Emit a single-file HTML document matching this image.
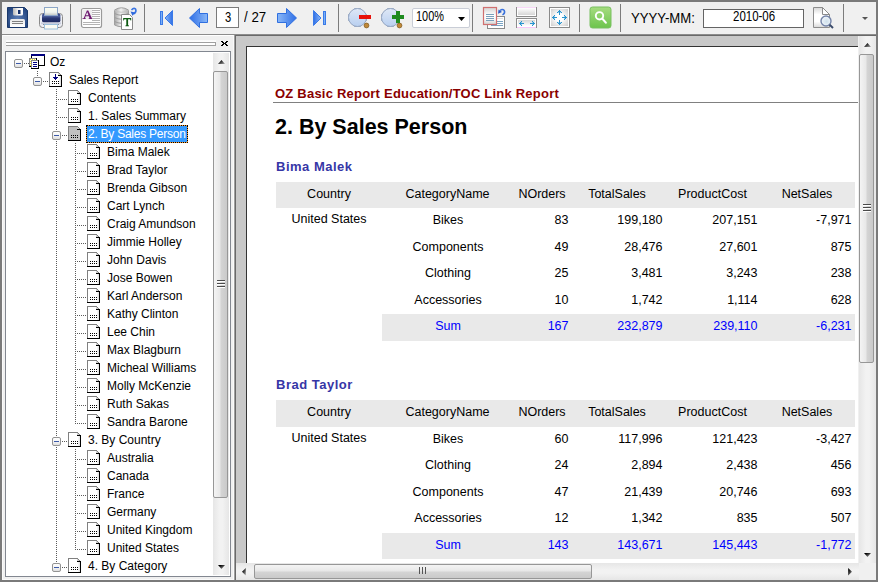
<!DOCTYPE html>
<html><head><meta charset="utf-8"><style>
html,body{margin:0;padding:0;}
body{width:878px;height:582px;overflow:hidden;position:relative;background:#f0f0f0;font-family:"Liberation Sans", sans-serif;}
svg{overflow:visible}
</style></head><body>
<div style="position:absolute;left:0px;top:0px;width:878px;height:2px;background:#7a7a7a"></div><div style="position:absolute;left:0px;top:580px;width:878px;height:2px;background:#7a7a7a"></div><div style="position:absolute;left:0px;top:0px;width:2px;height:582px;background:#7a7a7a"></div><div style="position:absolute;left:876px;top:0px;width:2px;height:582px;background:#7a7a7a"></div><div style="position:absolute;left:2px;top:34px;width:874px;height:1px;background:#8c8c8c"></div><div style="position:absolute;left:70px;top:4px;width:1px;height:28px;background:#7c7c7c"></div><div style="position:absolute;left:144px;top:4px;width:1px;height:28px;background:#7c7c7c"></div><div style="position:absolute;left:338px;top:4px;width:1px;height:28px;background:#7c7c7c"></div><div style="position:absolute;left:472px;top:4px;width:1px;height:28px;background:#7c7c7c"></div><div style="position:absolute;left:579px;top:4px;width:1px;height:28px;background:#7c7c7c"></div><div style="position:absolute;left:620px;top:4px;width:1px;height:28px;background:#7c7c7c"></div><div style="position:absolute;left:843px;top:4px;width:1px;height:28px;background:#7c7c7c"></div><svg style="position:absolute;left:7px;top:7px;" width="22" height="22" viewBox="0 0 22 22">
<defs><radialGradient id="fl" cx="0.5" cy="0.55" r="0.6"><stop offset="0" stop-color="#5a7cb4"/><stop offset="1" stop-color="#244680"/></radialGradient>
<linearGradient id="fsh2" x1="0" y1="0" x2="1" y2="0"><stop offset="0" stop-color="#b8b8b8"/><stop offset="0.5" stop-color="#f4f4f4"/><stop offset="1" stop-color="#ffffff"/></linearGradient>
<linearGradient id="fsh" x1="0" y1="0" x2="0" y2="1"><stop offset="0" stop-color="#e8e8e8"/><stop offset="1" stop-color="#ffffff"/></linearGradient></defs>
<path d="M0.5 0.5 H17.5 L20.5 3.5 V20.5 H0.5 Z" fill="url(#fl)" stroke="#1a386a"/>
<path d="M6 1 H16 V7 Q16 8.5 14.5 8.5 H7.5 Q6 8.5 6 7 Z" fill="url(#fsh2)"/>
<rect x="11" y="3" width="2.5" height="4" fill="#14306a"/>
<path d="M3 20 V13.5 Q3 12 4.5 12 H16.5 Q18 12 18 13.5 V20 Z" fill="url(#fsh)"/>
<rect x="5" y="14" width="11" height="1" fill="#808080"/>
<rect x="5" y="16" width="11" height="1" fill="#808080"/>
</svg><svg style="position:absolute;left:38px;top:6px;" width="27" height="25" viewBox="0 0 27 25">
<defs><linearGradient id="pb" x1="0" y1="0" x2="0" y2="1"><stop offset="0" stop-color="#34458a"/><stop offset="0.35" stop-color="#4a5c98"/><stop offset="0.5" stop-color="#2a3a76"/><stop offset="1" stop-color="#1c285e"/></linearGradient>
<linearGradient id="pp" x1="0" y1="0" x2="0" y2="1"><stop offset="0" stop-color="#fffff0"/><stop offset="0.6" stop-color="#eef4f0"/><stop offset="1" stop-color="#c0c4c0"/></linearGradient></defs>
<rect x="1.5" y="7.5" width="23" height="14" rx="3" fill="#eceef4" stroke="#8a8a8a"/>
<rect x="4" y="7.6" width="18.4" height="8.8" rx="2" fill="url(#pb)"/>
<rect x="3" y="16.4" width="20" height="1.8" fill="#c8cede"/>
<rect x="5" y="18.2" width="16" height="0.8" fill="#707888"/>
<rect x="6.5" y="1.5" width="13" height="8" fill="url(#pp)" stroke="#8ca6c8"/>
<rect x="6.5" y="18.5" width="13" height="4.5" fill="#fbfbf2" stroke="#9cc0dc"/>
</svg><svg style="position:absolute;left:80px;top:7px;" width="24" height="23" viewBox="0 0 24 23">
<rect x="1.5" y="1.5" width="20" height="19" rx="2" fill="#fff" stroke="#9a9a9a" stroke-width="1.2"/>
<rect x="2.5" y="2.5" width="10" height="10" fill="#eeeeee"/>
<path fill-rule="evenodd" fill="#6e1a72" d="M2.5 12 H5.8 V11.2 H5 L5.6 9.3 H8.9 L9.5 11.2 H8.7 V12 H12.6 V11.2 H11.9 L8.3 3.4 H6.9 L3.7 11.2 H2.5 Z M5.9 8.3 L7.2 4.9 L8.5 8.3 Z"/>
<g fill="#b4b4b4"><rect x="12" y="3" width="8" height="1"/><rect x="12" y="5" width="8" height="1"/><rect x="12" y="7" width="8" height="1"/><rect x="12" y="9" width="8" height="1"/><rect x="12" y="11" width="8" height="1"/><rect x="12" y="13" width="8" height="1"/><rect x="3" y="15" width="17" height="1"/><rect x="3" y="17" width="17" height="1"/></g>
</svg><svg style="position:absolute;left:113px;top:6px;" width="26" height="24" viewBox="0 0 26 24">
<defs><linearGradient id="db" x1="0" y1="0" x2="1" y2="0"><stop offset="0" stop-color="#a4a4a4"/><stop offset="0.45" stop-color="#f0f0f0"/><stop offset="1" stop-color="#b0b0b0"/></linearGradient></defs>
<path d="M1.5 4 Q8.5 -0.5 15.5 4 V19 Q8.5 22.5 1.5 19 Z" fill="url(#db)" stroke="#a0a0a0"/>
<path d="M1.5 4.5 Q8.5 8 15.5 4.5" fill="none" stroke="#c4c4c4"/><path d="M1.5 7.5 Q8.5 11 15.5 7.5 M1.5 11.5 Q8.5 15 15.5 11.5 M1.5 15.5 Q8.5 19 15.5 15.5" fill="none" stroke="#9c9c9c"/>
<path d="M8.5 8.5 H16.5 L19.5 11.5 V23.5 H8.5 Z" fill="#fff" stroke="#8a8a8a"/>
<path fill="#0d5a12" d="M10.2 12 H18.2 V14.6 H17.6 L17 13.2 H15.1 V19.3 L16 19.6 V20.2 H12.4 V19.6 L13.3 19.3 V13.2 H11.4 L10.8 14.6 H10.2 Z"/>
<path d="M18.5 4 Q20.5 1.5 22.5 2.8 Q24 5.5 21 8" fill="none" stroke="#3a74e0" stroke-width="1.5"/>
<path d="M17.5 5.5 L19.5 9.8 L22.5 6.5 Z" fill="#2e68dc"/>
</svg><svg style="position:absolute;left:159px;top:9px;" width="16" height="18" viewBox="0 0 16 18"><defs><linearGradient id="bg1" x1="1" y1="0" x2="0" y2="0"><stop offset="0" stop-color="#2f6fe6"/><stop offset="1" stop-color="#8ab8f8"/></linearGradient></defs>
<rect x="1.5" y="2.5" width="2" height="13" fill="#7ab0f6" stroke="#3a7ae8"/>
<path d="M6 9 L13.5 1.5 V16.5 Z" fill="url(#bg1)" stroke="#3a7ae8"/>
</svg><svg style="position:absolute;left:188px;top:7px;" width="22" height="22" viewBox="0 0 22 22"><defs><linearGradient id="bg2" x1="0" y1="0" x2="1" y2="0"><stop offset="0" stop-color="#2f6fe6"/><stop offset="1" stop-color="#8ab8f8"/></linearGradient></defs>
<path d="M1.5 11 L11.5 1.5 V6.5 H19.5 V15.5 H11.5 V20.5 Z" fill="url(#bg2)" stroke="#2f6fe0"/>
</svg><svg style="position:absolute;left:276px;top:7px;" width="22" height="22" viewBox="0 0 22 22"><defs><linearGradient id="bg3" x1="1" y1="0" x2="0" y2="0"><stop offset="0" stop-color="#2f6fe6"/><stop offset="1" stop-color="#8ab8f8"/></linearGradient></defs>
<path d="M20.5 11 L10.5 1.5 V6.5 H1.5 V15.5 H10.5 V20.5 Z" fill="url(#bg3)" stroke="#2f6fe0"/>
</svg><svg style="position:absolute;left:312px;top:9px;" width="16" height="18" viewBox="0 0 16 18"><defs><linearGradient id="bg4" x1="0" y1="0" x2="1" y2="0"><stop offset="0" stop-color="#2f6fe6"/><stop offset="1" stop-color="#8ab8f8"/></linearGradient></defs>
<path d="M1.5 1.5 L9 9 L1.5 16.5 Z" fill="url(#bg4)" stroke="#3a7ae8"/>
<rect x="11.5" y="2.5" width="2" height="13" fill="#7ab0f6" stroke="#3a7ae8"/>
</svg><div style="position:absolute;left:216px;top:7px;width:21px;height:19px;background:#fff;border:1px solid #7a7a7a"></div><div style="position:absolute;left:225px;top:7.15px;font-size:14px;line-height:20px;color:#000;font-weight:normal;white-space:nowrap;transform:scaleX(0.8);transform-origin:0 0">3</div><div style="position:absolute;left:244px;top:7.15px;font-size:14px;line-height:20px;color:#000;font-weight:normal;white-space:nowrap;transform:scaleX(0.95);transform-origin:0 0">/ 27</div><svg style="position:absolute;left:348px;top:8px;" width="24" height="22" viewBox="0 0 24 22"><defs><linearGradient id="zg1" x1="0" y1="0" x2="0" y2="1"><stop offset="0" stop-color="#dfe8f6"/><stop offset="1" stop-color="#b8cff0"/></linearGradient></defs>
<path d="M6.5 0.5 H12.5 L18.5 6.5 V12.5 L12.5 18.5 H6.5 L0.5 12.5 V6.5 Z" fill="url(#zg1)" stroke="#9aaac4" stroke-linejoin="round"/><circle cx="9.5" cy="9.5" r="9" fill="url(#zg1)" stroke="#9aaac4"/>
<circle cx="18.5" cy="17.5" r="2.4" fill="#c08838" stroke="#7a5418" stroke-width="0.7"/><rect x="11" y="7" width="12" height="4" fill="#e8120a"/></svg><svg style="position:absolute;left:381px;top:8px;" width="24" height="22" viewBox="0 0 24 22"><defs><linearGradient id="zg2" x1="0" y1="0" x2="0" y2="1"><stop offset="0" stop-color="#dfe8f6"/><stop offset="1" stop-color="#b8cff0"/></linearGradient></defs>
<path d="M6.5 0.5 H12.5 L18.5 6.5 V12.5 L12.5 18.5 H6.5 L0.5 12.5 V6.5 Z" fill="url(#zg2)" stroke="#9aaac4" stroke-linejoin="round"/><circle cx="9.5" cy="9.5" r="9" fill="url(#zg2)" stroke="#9aaac4"/>
<circle cx="18.5" cy="17.5" r="2.4" fill="#c08838" stroke="#7a5418" stroke-width="0.7"/><rect x="11" y="7" width="12" height="4" fill="#1e8a1e"/><rect x="15" y="3" width="4" height="12" fill="#1e8a1e"/></svg><div style="position:absolute;left:412px;top:8px;width:56px;height:18px;background:#fff;border:1px solid #c9cdd6;border-radius:2px"></div><div style="position:absolute;left:416px;top:6.15px;font-size:14px;line-height:20px;color:#000;font-weight:normal;white-space:nowrap;transform:scaleX(0.78);transform-origin:0 0">100%</div><svg style="position:absolute;left:458px;top:17px;" width="8" height="5" viewBox="0 0 8 5"><path d="M0 0 H7 L3.5 4 Z" fill="#000"/></svg><svg style="position:absolute;left:482px;top:6px;" width="24" height="24" viewBox="0 0 24 24">
<defs><linearGradient id="pg1" x1="0" y1="0" x2="0" y2="1"><stop offset="0" stop-color="#d4d4d4"/><stop offset="0.45" stop-color="#ffffff"/><stop offset="0.7" stop-color="#f8f8f8"/><stop offset="1" stop-color="#d0d0d0"/></linearGradient></defs>
<rect x="5.5" y="10.5" width="17" height="12" fill="#fff" stroke="#8a8a8a"/>
<rect x="15" y="12" width="6" height="1" fill="#e0e0e0"/>
<g fill="#7aa4c4"><rect x="15" y="15" width="6" height="1"/><rect x="15" y="17" width="6" height="1"/><rect x="9" y="19" width="12" height="1"/></g>
<rect x="1.5" y="1.5" width="13" height="17" fill="url(#pg1)" stroke="#d07070" stroke-width="1.2"/>
<g fill="#7aa0bc"><rect x="4" y="8" width="8" height="1"/><rect x="4" y="10" width="8" height="1"/><rect x="4" y="12" width="8" height="1"/><rect x="4" y="14" width="8" height="1"/></g>
<path d="M18 4.5 Q20.5 2.5 22.3 4.5 Q23.5 7 20.5 9" fill="none" stroke="#3a72dc" stroke-width="1.5"/>
<path d="M16 7.8 L16.6 3.4 L20 6 Z" fill="#2a5cc8"/>
</svg><svg style="position:absolute;left:515px;top:6px;" width="24" height="23" viewBox="0 0 24 23"><defs><linearGradient id="pg2" x1="0" y1="0" x2="0" y2="1"><stop offset="0" stop-color="#ffffff"/><stop offset="1" stop-color="#d6d6d6"/></linearGradient><linearGradient id="pg2b" x1="0" y1="0" x2="0" y2="1"><stop offset="0" stop-color="#d6d6d6"/><stop offset="1" stop-color="#ffffff"/></linearGradient></defs><g shape-rendering="crispEdges"><rect x="2" y="1" width="19" height="9" fill="#fff"/><rect x="3" y="2" width="17" height="7" fill="url(#pg2)"/><rect x="2" y="1" width="19" height="1" fill="#f8d8f8"/><rect x="1" y="1" width="1" height="10" fill="#8c8c8c"/><rect x="21" y="1" width="1" height="10" fill="#8c8c8c"/><rect x="1" y="10" width="21" height="1" fill="#8c8c8c"/><rect x="2" y="13" width="19" height="8" fill="#fff"/><rect x="3" y="14" width="17" height="6" fill="url(#pg2b)"/><rect x="2" y="21" width="19" height="1" fill="#f8c8f8"/><rect x="1" y="12" width="21" height="1" fill="#8c8c8c"/><rect x="1" y="12" width="1" height="10" fill="#8c8c8c"/><rect x="21" y="12" width="1" height="10" fill="#8c8c8c"/><rect x="4" y="17" width="5" height="1" fill="#2994cf"/><rect x="5" y="16" width="1" height="1" fill="#2994cf"/><rect x="5" y="18" width="1" height="1" fill="#2994cf"/><rect x="6" y="15" width="1" height="1" fill="#2994cf"/><rect x="6" y="19" width="1" height="1" fill="#2994cf"/><rect x="6" y="16" width="1" height="1" fill="#9fd0ec"/><rect x="6" y="18" width="1" height="1" fill="#9fd0ec"/><rect x="15" y="17" width="5" height="1" fill="#2994cf"/><rect x="18" y="16" width="1" height="1" fill="#2994cf"/><rect x="18" y="18" width="1" height="1" fill="#2994cf"/><rect x="17" y="15" width="1" height="1" fill="#2994cf"/><rect x="17" y="19" width="1" height="1" fill="#2994cf"/><rect x="17" y="16" width="1" height="1" fill="#9fd0ec"/><rect x="17" y="18" width="1" height="1" fill="#9fd0ec"/></g></svg><svg style="position:absolute;left:548px;top:6px;" width="23" height="23" viewBox="0 0 23 23"><defs><radialGradient id="pg3" cx="0.5" cy="0.5" r="0.7"><stop offset="0.3" stop-color="#ffffff"/><stop offset="1" stop-color="#cfcfcf"/></radialGradient></defs><g shape-rendering="crispEdges"><rect x="1" y="1" width="21" height="21" fill="#8a8a8a"/><rect x="2" y="2" width="19" height="19" fill="#fff"/><rect x="3" y="3" width="17" height="17" fill="url(#pg3)"/><rect x="11" y="4" width="1" height="5" fill="#2994cf"/><rect x="10" y="5" width="1" height="1" fill="#2994cf"/><rect x="12" y="5" width="1" height="1" fill="#2994cf"/><rect x="9" y="6" width="1" height="1" fill="#2994cf"/><rect x="13" y="6" width="1" height="1" fill="#2994cf"/><rect x="10" y="6" width="1" height="1" fill="#9fd0ec"/><rect x="12" y="6" width="1" height="1" fill="#9fd0ec"/><rect x="11" y="14" width="1" height="5" fill="#2994cf"/><rect x="10" y="17" width="1" height="1" fill="#2994cf"/><rect x="12" y="17" width="1" height="1" fill="#2994cf"/><rect x="9" y="16" width="1" height="1" fill="#2994cf"/><rect x="13" y="16" width="1" height="1" fill="#2994cf"/><rect x="10" y="16" width="1" height="1" fill="#9fd0ec"/><rect x="12" y="16" width="1" height="1" fill="#9fd0ec"/><rect x="4" y="11" width="5" height="1" fill="#2994cf"/><rect x="5" y="10" width="1" height="1" fill="#2994cf"/><rect x="5" y="12" width="1" height="1" fill="#2994cf"/><rect x="6" y="9" width="1" height="1" fill="#2994cf"/><rect x="6" y="13" width="1" height="1" fill="#2994cf"/><rect x="6" y="10" width="1" height="1" fill="#9fd0ec"/><rect x="6" y="12" width="1" height="1" fill="#9fd0ec"/><rect x="14" y="11" width="5" height="1" fill="#2994cf"/><rect x="17" y="10" width="1" height="1" fill="#2994cf"/><rect x="17" y="12" width="1" height="1" fill="#2994cf"/><rect x="16" y="9" width="1" height="1" fill="#2994cf"/><rect x="16" y="13" width="1" height="1" fill="#2994cf"/><rect x="16" y="10" width="1" height="1" fill="#9fd0ec"/><rect x="16" y="12" width="1" height="1" fill="#9fd0ec"/></g></svg><svg style="position:absolute;left:589px;top:6px;" width="23" height="23" viewBox="0 0 23 23">
<defs><linearGradient id="gs" x1="0" y1="0" x2="0" y2="1"><stop offset="0" stop-color="#a6dc80"/><stop offset="1" stop-color="#6cc44c"/></linearGradient></defs>
<rect x="1" y="1" width="21" height="21" rx="2.5" fill="url(#gs)" stroke="#78c060"/>
<circle cx="10.5" cy="9.8" r="3.7" fill="none" stroke="#fff" stroke-width="1.9"/>
<path d="M13.3 12.6 L16.8 16.6" stroke="#fff" stroke-width="2.2" stroke-linecap="round"/>
</svg><div style="position:absolute;left:631px;top:8.15px;font-size:14px;line-height:20px;color:#000;font-weight:normal;white-space:nowrap;transform:scaleX(0.94);transform-origin:0 0">YYYY-MM:</div><div style="position:absolute;left:703px;top:9px;width:99px;height:17px;background:#fff;border:1px solid #646464"></div><div style="position:absolute;left:733px;top:6.15px;font-size:14px;line-height:20px;color:#000;font-weight:normal;white-space:nowrap;transform:scaleX(0.82);transform-origin:0 0">2010-06</div><svg style="position:absolute;left:812px;top:6px;" width="24" height="24" viewBox="0 0 24 24">
<defs><linearGradient id="pv" x1="0" y1="0" x2="0" y2="1"><stop offset="0" stop-color="#d8d8d8"/><stop offset="0.35" stop-color="#ffffff"/><stop offset="0.7" stop-color="#ffffff"/><stop offset="1" stop-color="#d8d8d8"/></linearGradient>
<radialGradient id="mg" cx="0.55" cy="0.55" r="0.6"><stop offset="0" stop-color="#cfe0ec"/><stop offset="1" stop-color="#f4f8fc"/></radialGradient></defs>
<path d="M1.5 1.5 H10.5 L17.5 8.5 V21.5 H1.5 Z" fill="url(#pv)" stroke="#8c8c8c"/>
<path d="M10.5 1.5 V8.5 H17.5 Z" fill="#fff" stroke="#8c8c8c"/>
<circle cx="14" cy="15" r="5" fill="url(#mg)" stroke="#7484a8" stroke-width="1.4"/>
<path d="M17.6 18.6 L21 22" stroke="#3a4a6a" stroke-width="2"/>
</svg><svg style="position:absolute;left:862px;top:17px;" width="7" height="4" viewBox="0 0 7 4"><path d="M0 0 H6 L3 3 Z" fill="#555"/></svg><div style="position:absolute;left:2px;top:35px;width:232px;height:1px;background:#fff"></div><div style="position:absolute;left:2px;top:35px;width:1px;height:545px;background:#fafafa"></div><div style="position:absolute;left:2px;top:579px;width:232px;height:1px;background:#fafafa"></div><div style="position:absolute;left:6px;top:40px;width:210px;height:2px;background:linear-gradient(#f8f8f8,#fff)"></div><div style="position:absolute;left:6px;top:42px;width:210px;height:1px;background:#a0a0a0"></div><div style="position:absolute;left:6px;top:43px;width:210px;height:2px;background:#fff"></div><div style="position:absolute;left:6px;top:45px;width:210px;height:1px;background:#a0a0a0"></div><div style="position:absolute;left:215px;top:42px;width:1px;height:4px;background:#a0a0a0"></div><svg style="position:absolute;left:221px;top:41px;" width="7" height="5" viewBox="0 0 7 5"><g fill="#000" shape-rendering="crispEdges"><rect x="0" y="0" width="1" height="1"/><rect x="1" y="0" width="1" height="1"/><rect x="5" y="0" width="1" height="1"/><rect x="6" y="0" width="1" height="1"/><rect x="1" y="1" width="1" height="1"/><rect x="2" y="1" width="1" height="1"/><rect x="4" y="1" width="1" height="1"/><rect x="5" y="1" width="1" height="1"/><rect x="2" y="2" width="1" height="1"/><rect x="3" y="2" width="1" height="1"/><rect x="4" y="2" width="1" height="1"/><rect x="1" y="3" width="1" height="1"/><rect x="2" y="3" width="1" height="1"/><rect x="4" y="3" width="1" height="1"/><rect x="5" y="3" width="1" height="1"/><rect x="0" y="4" width="1" height="1"/><rect x="1" y="4" width="1" height="1"/><rect x="5" y="4" width="1" height="1"/><rect x="6" y="4" width="1" height="1"/></g></svg><div style="position:absolute;left:5px;top:51px;width:224px;height:524px;background:#fff;border:1px solid #828790"></div><div style="position:absolute;left:233px;top:35px;width:1px;height:545px;background:#fafafa"></div><div style="position:absolute;left:234px;top:35px;width:1px;height:545px;background:#a0a0a0"></div><div style="position:absolute;left:235px;top:35px;width:1px;height:545px;background:#696969"></div><div style="position:absolute;left:213px;top:53px;width:16px;height:522px;background:linear-gradient(to right,#e6e6e6,#f2f2f2 40%,#f2f2f2 60%,#e6e6e6)"></div><svg style="position:absolute;left:218px;top:60px;" width="8" height="5" viewBox="0 0 8 5"><defs><linearGradient id="uat" x1="0" y1="0" x2="1" y2="1"><stop offset="0.2" stop-color="#000"/><stop offset="1" stop-color="#b0b0b0"/></linearGradient></defs><path d="M0 4 L3.5 0 L7 4 Z" fill="url(#uat)"/></svg><svg style="position:absolute;left:218px;top:565px;" width="8" height="5" viewBox="0 0 8 5"><defs><linearGradient id="dat" x1="0" y1="0" x2="1" y2="1"><stop offset="0.2" stop-color="#000"/><stop offset="1" stop-color="#b0b0b0"/></linearGradient></defs><path d="M0 0 L3.5 4 L7 0 Z" fill="url(#dat)"/></svg><div style="position:absolute;left:213px;top:71px;width:13px;height:425px;border:1px solid #979797;border-radius:2px;background:linear-gradient(to right,#f4f4f4,#e8e8e8 45%,#d4d4d4 55%,#cacaca)"></div><div style="position:absolute;left:217px;top:280px;width:8px;height:1px;background:#4a4a4a;box-shadow:0 1px 0 #fff"></div><div style="position:absolute;left:217px;top:283px;width:8px;height:1px;background:#4a4a4a;box-shadow:0 1px 0 #fff"></div><div style="position:absolute;left:217px;top:286px;width:8px;height:1px;background:#4a4a4a;box-shadow:0 1px 0 #fff"></div><div style="position:absolute;left:236px;top:35px;width:640px;height:1px;background:#696969"></div><div style="position:absolute;left:236px;top:36px;width:622px;height:527px;background:#c8c8c8"></div><div style="position:absolute;left:246px;top:46px;width:612px;height:517px;background:#fff;border-left:1px solid #333;border-top:1px solid #333;box-sizing:border-box"></div><div style="position:absolute;left:859px;top:36px;width:17px;height:527px;background:linear-gradient(to right,#e6e6e6,#f2f2f2 40%,#f2f2f2 60%,#e6e6e6)"></div><svg style="position:absolute;left:864px;top:43px;" width="8" height="5" viewBox="0 0 8 5"><defs><linearGradient id="uar" x1="0" y1="0" x2="1" y2="1"><stop offset="0.2" stop-color="#000"/><stop offset="1" stop-color="#b0b0b0"/></linearGradient></defs><path d="M0 4 L3.5 0 L7 4 Z" fill="url(#uar)"/></svg><svg style="position:absolute;left:864px;top:553px;" width="8" height="5" viewBox="0 0 8 5"><defs><linearGradient id="dar" x1="0" y1="0" x2="1" y2="1"><stop offset="0.2" stop-color="#000"/><stop offset="1" stop-color="#b0b0b0"/></linearGradient></defs><path d="M0 0 L3.5 4 L7 0 Z" fill="url(#dar)"/></svg><div style="position:absolute;left:859px;top:54px;width:13px;height:307px;border:1px solid #979797;border-radius:2px;background:linear-gradient(to right,#f4f4f4,#e8e8e8 45%,#d4d4d4 55%,#cacaca)"></div><div style="position:absolute;left:863px;top:204px;width:8px;height:1px;background:#4a4a4a;box-shadow:0 1px 0 #fff"></div><div style="position:absolute;left:863px;top:207px;width:8px;height:1px;background:#4a4a4a;box-shadow:0 1px 0 #fff"></div><div style="position:absolute;left:863px;top:210px;width:8px;height:1px;background:#4a4a4a;box-shadow:0 1px 0 #fff"></div><div style="position:absolute;left:236px;top:563px;width:623px;height:17px;background:linear-gradient(to bottom,#e6e6e6,#f2f2f2 40%,#f2f2f2 60%,#e6e6e6)"></div><svg style="position:absolute;left:241px;top:567px;" width="6" height="9" viewBox="0 0 6 9"><defs><linearGradient id="la" x1="0" y1="0" x2="1" y2="1"><stop offset="0.2" stop-color="#000"/><stop offset="1" stop-color="#b0b0b0"/></linearGradient></defs><path d="M4.8 1 L1 4.8 L4.8 8.6 Z" fill="url(#la)"/></svg><svg style="position:absolute;left:848px;top:567px;" width="6" height="9" viewBox="0 0 6 9"><defs><linearGradient id="ra" x1="0" y1="0" x2="1" y2="1"><stop offset="0.2" stop-color="#000"/><stop offset="1" stop-color="#b0b0b0"/></linearGradient></defs><path d="M0.2 1 L4 4.8 L0.2 8.6 Z" fill="url(#ra)"/></svg><div style="position:absolute;left:254px;top:564px;width:336px;height:13px;border:1px solid #979797;border-radius:2px;background:linear-gradient(to bottom,#f4f4f4,#e8e8e8 45%,#d4d4d4 55%,#cacaca)"></div><div style="position:absolute;left:419px;top:567px;width:1px;height:7px;background:#555"></div><div style="position:absolute;left:422px;top:567px;width:1px;height:7px;background:#555"></div><div style="position:absolute;left:425px;top:567px;width:1px;height:7px;background:#555"></div><div style="position:absolute;left:859px;top:563px;width:17px;height:17px;background:#f0f0f0"></div><svg style="position:absolute;left:0px;top:0px;pointer-events:none" width="878" height="582" viewBox="0 0 878 582"><g fill="#5a5a5a"><rect x="24" y="63" width="1" height="1"/><rect x="26" y="63" width="1" height="1"/><rect x="28" y="63" width="1" height="1"/><rect x="43" y="81" width="1" height="1"/><rect x="45" y="81" width="1" height="1"/><rect x="47" y="81" width="1" height="1"/><rect x="56" y="99" width="1" height="1"/><rect x="58" y="99" width="1" height="1"/><rect x="60" y="99" width="1" height="1"/><rect x="62" y="99" width="1" height="1"/><rect x="64" y="99" width="1" height="1"/><rect x="66" y="99" width="1" height="1"/><rect x="56" y="117" width="1" height="1"/><rect x="58" y="117" width="1" height="1"/><rect x="60" y="117" width="1" height="1"/><rect x="62" y="117" width="1" height="1"/><rect x="64" y="117" width="1" height="1"/><rect x="66" y="117" width="1" height="1"/><rect x="62" y="135" width="1" height="1"/><rect x="64" y="135" width="1" height="1"/><rect x="66" y="135" width="1" height="1"/><rect x="75" y="153" width="1" height="1"/><rect x="77" y="153" width="1" height="1"/><rect x="79" y="153" width="1" height="1"/><rect x="81" y="153" width="1" height="1"/><rect x="83" y="153" width="1" height="1"/><rect x="85" y="153" width="1" height="1"/><rect x="75" y="171" width="1" height="1"/><rect x="77" y="171" width="1" height="1"/><rect x="79" y="171" width="1" height="1"/><rect x="81" y="171" width="1" height="1"/><rect x="83" y="171" width="1" height="1"/><rect x="85" y="171" width="1" height="1"/><rect x="75" y="189" width="1" height="1"/><rect x="77" y="189" width="1" height="1"/><rect x="79" y="189" width="1" height="1"/><rect x="81" y="189" width="1" height="1"/><rect x="83" y="189" width="1" height="1"/><rect x="85" y="189" width="1" height="1"/><rect x="75" y="207" width="1" height="1"/><rect x="77" y="207" width="1" height="1"/><rect x="79" y="207" width="1" height="1"/><rect x="81" y="207" width="1" height="1"/><rect x="83" y="207" width="1" height="1"/><rect x="85" y="207" width="1" height="1"/><rect x="75" y="225" width="1" height="1"/><rect x="77" y="225" width="1" height="1"/><rect x="79" y="225" width="1" height="1"/><rect x="81" y="225" width="1" height="1"/><rect x="83" y="225" width="1" height="1"/><rect x="85" y="225" width="1" height="1"/><rect x="75" y="243" width="1" height="1"/><rect x="77" y="243" width="1" height="1"/><rect x="79" y="243" width="1" height="1"/><rect x="81" y="243" width="1" height="1"/><rect x="83" y="243" width="1" height="1"/><rect x="85" y="243" width="1" height="1"/><rect x="75" y="261" width="1" height="1"/><rect x="77" y="261" width="1" height="1"/><rect x="79" y="261" width="1" height="1"/><rect x="81" y="261" width="1" height="1"/><rect x="83" y="261" width="1" height="1"/><rect x="85" y="261" width="1" height="1"/><rect x="75" y="279" width="1" height="1"/><rect x="77" y="279" width="1" height="1"/><rect x="79" y="279" width="1" height="1"/><rect x="81" y="279" width="1" height="1"/><rect x="83" y="279" width="1" height="1"/><rect x="85" y="279" width="1" height="1"/><rect x="75" y="297" width="1" height="1"/><rect x="77" y="297" width="1" height="1"/><rect x="79" y="297" width="1" height="1"/><rect x="81" y="297" width="1" height="1"/><rect x="83" y="297" width="1" height="1"/><rect x="85" y="297" width="1" height="1"/><rect x="75" y="315" width="1" height="1"/><rect x="77" y="315" width="1" height="1"/><rect x="79" y="315" width="1" height="1"/><rect x="81" y="315" width="1" height="1"/><rect x="83" y="315" width="1" height="1"/><rect x="85" y="315" width="1" height="1"/><rect x="75" y="333" width="1" height="1"/><rect x="77" y="333" width="1" height="1"/><rect x="79" y="333" width="1" height="1"/><rect x="81" y="333" width="1" height="1"/><rect x="83" y="333" width="1" height="1"/><rect x="85" y="333" width="1" height="1"/><rect x="75" y="351" width="1" height="1"/><rect x="77" y="351" width="1" height="1"/><rect x="79" y="351" width="1" height="1"/><rect x="81" y="351" width="1" height="1"/><rect x="83" y="351" width="1" height="1"/><rect x="85" y="351" width="1" height="1"/><rect x="75" y="369" width="1" height="1"/><rect x="77" y="369" width="1" height="1"/><rect x="79" y="369" width="1" height="1"/><rect x="81" y="369" width="1" height="1"/><rect x="83" y="369" width="1" height="1"/><rect x="85" y="369" width="1" height="1"/><rect x="75" y="387" width="1" height="1"/><rect x="77" y="387" width="1" height="1"/><rect x="79" y="387" width="1" height="1"/><rect x="81" y="387" width="1" height="1"/><rect x="83" y="387" width="1" height="1"/><rect x="85" y="387" width="1" height="1"/><rect x="75" y="405" width="1" height="1"/><rect x="77" y="405" width="1" height="1"/><rect x="79" y="405" width="1" height="1"/><rect x="81" y="405" width="1" height="1"/><rect x="83" y="405" width="1" height="1"/><rect x="85" y="405" width="1" height="1"/><rect x="75" y="423" width="1" height="1"/><rect x="77" y="423" width="1" height="1"/><rect x="79" y="423" width="1" height="1"/><rect x="81" y="423" width="1" height="1"/><rect x="83" y="423" width="1" height="1"/><rect x="85" y="423" width="1" height="1"/><rect x="62" y="441" width="1" height="1"/><rect x="64" y="441" width="1" height="1"/><rect x="66" y="441" width="1" height="1"/><rect x="75" y="459" width="1" height="1"/><rect x="77" y="459" width="1" height="1"/><rect x="79" y="459" width="1" height="1"/><rect x="81" y="459" width="1" height="1"/><rect x="83" y="459" width="1" height="1"/><rect x="85" y="459" width="1" height="1"/><rect x="75" y="477" width="1" height="1"/><rect x="77" y="477" width="1" height="1"/><rect x="79" y="477" width="1" height="1"/><rect x="81" y="477" width="1" height="1"/><rect x="83" y="477" width="1" height="1"/><rect x="85" y="477" width="1" height="1"/><rect x="75" y="495" width="1" height="1"/><rect x="77" y="495" width="1" height="1"/><rect x="79" y="495" width="1" height="1"/><rect x="81" y="495" width="1" height="1"/><rect x="83" y="495" width="1" height="1"/><rect x="85" y="495" width="1" height="1"/><rect x="75" y="513" width="1" height="1"/><rect x="77" y="513" width="1" height="1"/><rect x="79" y="513" width="1" height="1"/><rect x="81" y="513" width="1" height="1"/><rect x="83" y="513" width="1" height="1"/><rect x="85" y="513" width="1" height="1"/><rect x="75" y="531" width="1" height="1"/><rect x="77" y="531" width="1" height="1"/><rect x="79" y="531" width="1" height="1"/><rect x="81" y="531" width="1" height="1"/><rect x="83" y="531" width="1" height="1"/><rect x="85" y="531" width="1" height="1"/><rect x="75" y="549" width="1" height="1"/><rect x="77" y="549" width="1" height="1"/><rect x="79" y="549" width="1" height="1"/><rect x="81" y="549" width="1" height="1"/><rect x="83" y="549" width="1" height="1"/><rect x="85" y="549" width="1" height="1"/><rect x="62" y="567" width="1" height="1"/><rect x="64" y="567" width="1" height="1"/><rect x="66" y="567" width="1" height="1"/><rect x="37" y="71" width="1" height="1"/><rect x="37" y="73" width="1" height="1"/><rect x="37" y="75" width="1" height="1"/><rect x="56" y="89" width="1" height="1"/><rect x="56" y="91" width="1" height="1"/><rect x="56" y="93" width="1" height="1"/><rect x="56" y="95" width="1" height="1"/><rect x="56" y="97" width="1" height="1"/><rect x="56" y="99" width="1" height="1"/><rect x="56" y="101" width="1" height="1"/><rect x="56" y="103" width="1" height="1"/><rect x="56" y="105" width="1" height="1"/><rect x="56" y="107" width="1" height="1"/><rect x="56" y="109" width="1" height="1"/><rect x="56" y="111" width="1" height="1"/><rect x="56" y="113" width="1" height="1"/><rect x="56" y="115" width="1" height="1"/><rect x="56" y="117" width="1" height="1"/><rect x="56" y="119" width="1" height="1"/><rect x="56" y="121" width="1" height="1"/><rect x="56" y="123" width="1" height="1"/><rect x="56" y="125" width="1" height="1"/><rect x="56" y="127" width="1" height="1"/><rect x="56" y="129" width="1" height="1"/><rect x="56" y="131" width="1" height="1"/><rect x="56" y="133" width="1" height="1"/><rect x="56" y="135" width="1" height="1"/><rect x="56" y="137" width="1" height="1"/><rect x="56" y="139" width="1" height="1"/><rect x="56" y="141" width="1" height="1"/><rect x="56" y="143" width="1" height="1"/><rect x="56" y="145" width="1" height="1"/><rect x="56" y="147" width="1" height="1"/><rect x="56" y="149" width="1" height="1"/><rect x="56" y="151" width="1" height="1"/><rect x="56" y="153" width="1" height="1"/><rect x="56" y="155" width="1" height="1"/><rect x="56" y="157" width="1" height="1"/><rect x="56" y="159" width="1" height="1"/><rect x="56" y="161" width="1" height="1"/><rect x="56" y="163" width="1" height="1"/><rect x="56" y="165" width="1" height="1"/><rect x="56" y="167" width="1" height="1"/><rect x="56" y="169" width="1" height="1"/><rect x="56" y="171" width="1" height="1"/><rect x="56" y="173" width="1" height="1"/><rect x="56" y="175" width="1" height="1"/><rect x="56" y="177" width="1" height="1"/><rect x="56" y="179" width="1" height="1"/><rect x="56" y="181" width="1" height="1"/><rect x="56" y="183" width="1" height="1"/><rect x="56" y="185" width="1" height="1"/><rect x="56" y="187" width="1" height="1"/><rect x="56" y="189" width="1" height="1"/><rect x="56" y="191" width="1" height="1"/><rect x="56" y="193" width="1" height="1"/><rect x="56" y="195" width="1" height="1"/><rect x="56" y="197" width="1" height="1"/><rect x="56" y="199" width="1" height="1"/><rect x="56" y="201" width="1" height="1"/><rect x="56" y="203" width="1" height="1"/><rect x="56" y="205" width="1" height="1"/><rect x="56" y="207" width="1" height="1"/><rect x="56" y="209" width="1" height="1"/><rect x="56" y="211" width="1" height="1"/><rect x="56" y="213" width="1" height="1"/><rect x="56" y="215" width="1" height="1"/><rect x="56" y="217" width="1" height="1"/><rect x="56" y="219" width="1" height="1"/><rect x="56" y="221" width="1" height="1"/><rect x="56" y="223" width="1" height="1"/><rect x="56" y="225" width="1" height="1"/><rect x="56" y="227" width="1" height="1"/><rect x="56" y="229" width="1" height="1"/><rect x="56" y="231" width="1" height="1"/><rect x="56" y="233" width="1" height="1"/><rect x="56" y="235" width="1" height="1"/><rect x="56" y="237" width="1" height="1"/><rect x="56" y="239" width="1" height="1"/><rect x="56" y="241" width="1" height="1"/><rect x="56" y="243" width="1" height="1"/><rect x="56" y="245" width="1" height="1"/><rect x="56" y="247" width="1" height="1"/><rect x="56" y="249" width="1" height="1"/><rect x="56" y="251" width="1" height="1"/><rect x="56" y="253" width="1" height="1"/><rect x="56" y="255" width="1" height="1"/><rect x="56" y="257" width="1" height="1"/><rect x="56" y="259" width="1" height="1"/><rect x="56" y="261" width="1" height="1"/><rect x="56" y="263" width="1" height="1"/><rect x="56" y="265" width="1" height="1"/><rect x="56" y="267" width="1" height="1"/><rect x="56" y="269" width="1" height="1"/><rect x="56" y="271" width="1" height="1"/><rect x="56" y="273" width="1" height="1"/><rect x="56" y="275" width="1" height="1"/><rect x="56" y="277" width="1" height="1"/><rect x="56" y="279" width="1" height="1"/><rect x="56" y="281" width="1" height="1"/><rect x="56" y="283" width="1" height="1"/><rect x="56" y="285" width="1" height="1"/><rect x="56" y="287" width="1" height="1"/><rect x="56" y="289" width="1" height="1"/><rect x="56" y="291" width="1" height="1"/><rect x="56" y="293" width="1" height="1"/><rect x="56" y="295" width="1" height="1"/><rect x="56" y="297" width="1" height="1"/><rect x="56" y="299" width="1" height="1"/><rect x="56" y="301" width="1" height="1"/><rect x="56" y="303" width="1" height="1"/><rect x="56" y="305" width="1" height="1"/><rect x="56" y="307" width="1" height="1"/><rect x="56" y="309" width="1" height="1"/><rect x="56" y="311" width="1" height="1"/><rect x="56" y="313" width="1" height="1"/><rect x="56" y="315" width="1" height="1"/><rect x="56" y="317" width="1" height="1"/><rect x="56" y="319" width="1" height="1"/><rect x="56" y="321" width="1" height="1"/><rect x="56" y="323" width="1" height="1"/><rect x="56" y="325" width="1" height="1"/><rect x="56" y="327" width="1" height="1"/><rect x="56" y="329" width="1" height="1"/><rect x="56" y="331" width="1" height="1"/><rect x="56" y="333" width="1" height="1"/><rect x="56" y="335" width="1" height="1"/><rect x="56" y="337" width="1" height="1"/><rect x="56" y="339" width="1" height="1"/><rect x="56" y="341" width="1" height="1"/><rect x="56" y="343" width="1" height="1"/><rect x="56" y="345" width="1" height="1"/><rect x="56" y="347" width="1" height="1"/><rect x="56" y="349" width="1" height="1"/><rect x="56" y="351" width="1" height="1"/><rect x="56" y="353" width="1" height="1"/><rect x="56" y="355" width="1" height="1"/><rect x="56" y="357" width="1" height="1"/><rect x="56" y="359" width="1" height="1"/><rect x="56" y="361" width="1" height="1"/><rect x="56" y="363" width="1" height="1"/><rect x="56" y="365" width="1" height="1"/><rect x="56" y="367" width="1" height="1"/><rect x="56" y="369" width="1" height="1"/><rect x="56" y="371" width="1" height="1"/><rect x="56" y="373" width="1" height="1"/><rect x="56" y="375" width="1" height="1"/><rect x="56" y="377" width="1" height="1"/><rect x="56" y="379" width="1" height="1"/><rect x="56" y="381" width="1" height="1"/><rect x="56" y="383" width="1" height="1"/><rect x="56" y="385" width="1" height="1"/><rect x="56" y="387" width="1" height="1"/><rect x="56" y="389" width="1" height="1"/><rect x="56" y="391" width="1" height="1"/><rect x="56" y="393" width="1" height="1"/><rect x="56" y="395" width="1" height="1"/><rect x="56" y="397" width="1" height="1"/><rect x="56" y="399" width="1" height="1"/><rect x="56" y="401" width="1" height="1"/><rect x="56" y="403" width="1" height="1"/><rect x="56" y="405" width="1" height="1"/><rect x="56" y="407" width="1" height="1"/><rect x="56" y="409" width="1" height="1"/><rect x="56" y="411" width="1" height="1"/><rect x="56" y="413" width="1" height="1"/><rect x="56" y="415" width="1" height="1"/><rect x="56" y="417" width="1" height="1"/><rect x="56" y="419" width="1" height="1"/><rect x="56" y="421" width="1" height="1"/><rect x="56" y="423" width="1" height="1"/><rect x="56" y="425" width="1" height="1"/><rect x="56" y="427" width="1" height="1"/><rect x="56" y="429" width="1" height="1"/><rect x="56" y="431" width="1" height="1"/><rect x="56" y="433" width="1" height="1"/><rect x="56" y="435" width="1" height="1"/><rect x="56" y="437" width="1" height="1"/><rect x="56" y="439" width="1" height="1"/><rect x="56" y="441" width="1" height="1"/><rect x="56" y="443" width="1" height="1"/><rect x="56" y="445" width="1" height="1"/><rect x="56" y="447" width="1" height="1"/><rect x="56" y="449" width="1" height="1"/><rect x="56" y="451" width="1" height="1"/><rect x="56" y="453" width="1" height="1"/><rect x="56" y="455" width="1" height="1"/><rect x="56" y="457" width="1" height="1"/><rect x="56" y="459" width="1" height="1"/><rect x="56" y="461" width="1" height="1"/><rect x="56" y="463" width="1" height="1"/><rect x="56" y="465" width="1" height="1"/><rect x="56" y="467" width="1" height="1"/><rect x="56" y="469" width="1" height="1"/><rect x="56" y="471" width="1" height="1"/><rect x="56" y="473" width="1" height="1"/><rect x="56" y="475" width="1" height="1"/><rect x="56" y="477" width="1" height="1"/><rect x="56" y="479" width="1" height="1"/><rect x="56" y="481" width="1" height="1"/><rect x="56" y="483" width="1" height="1"/><rect x="56" y="485" width="1" height="1"/><rect x="56" y="487" width="1" height="1"/><rect x="56" y="489" width="1" height="1"/><rect x="56" y="491" width="1" height="1"/><rect x="56" y="493" width="1" height="1"/><rect x="56" y="495" width="1" height="1"/><rect x="56" y="497" width="1" height="1"/><rect x="56" y="499" width="1" height="1"/><rect x="56" y="501" width="1" height="1"/><rect x="56" y="503" width="1" height="1"/><rect x="56" y="505" width="1" height="1"/><rect x="56" y="507" width="1" height="1"/><rect x="56" y="509" width="1" height="1"/><rect x="56" y="511" width="1" height="1"/><rect x="56" y="513" width="1" height="1"/><rect x="56" y="515" width="1" height="1"/><rect x="56" y="517" width="1" height="1"/><rect x="56" y="519" width="1" height="1"/><rect x="56" y="521" width="1" height="1"/><rect x="56" y="523" width="1" height="1"/><rect x="56" y="525" width="1" height="1"/><rect x="56" y="527" width="1" height="1"/><rect x="56" y="529" width="1" height="1"/><rect x="56" y="531" width="1" height="1"/><rect x="56" y="533" width="1" height="1"/><rect x="56" y="535" width="1" height="1"/><rect x="56" y="537" width="1" height="1"/><rect x="56" y="539" width="1" height="1"/><rect x="56" y="541" width="1" height="1"/><rect x="56" y="543" width="1" height="1"/><rect x="56" y="545" width="1" height="1"/><rect x="56" y="547" width="1" height="1"/><rect x="56" y="549" width="1" height="1"/><rect x="56" y="551" width="1" height="1"/><rect x="56" y="553" width="1" height="1"/><rect x="56" y="555" width="1" height="1"/><rect x="56" y="557" width="1" height="1"/><rect x="56" y="559" width="1" height="1"/><rect x="56" y="561" width="1" height="1"/><rect x="56" y="563" width="1" height="1"/><rect x="56" y="565" width="1" height="1"/><rect x="56" y="567" width="1" height="1"/><rect x="75" y="143" width="1" height="1"/><rect x="75" y="145" width="1" height="1"/><rect x="75" y="147" width="1" height="1"/><rect x="75" y="149" width="1" height="1"/><rect x="75" y="151" width="1" height="1"/><rect x="75" y="153" width="1" height="1"/><rect x="75" y="155" width="1" height="1"/><rect x="75" y="157" width="1" height="1"/><rect x="75" y="159" width="1" height="1"/><rect x="75" y="161" width="1" height="1"/><rect x="75" y="163" width="1" height="1"/><rect x="75" y="165" width="1" height="1"/><rect x="75" y="167" width="1" height="1"/><rect x="75" y="169" width="1" height="1"/><rect x="75" y="171" width="1" height="1"/><rect x="75" y="173" width="1" height="1"/><rect x="75" y="175" width="1" height="1"/><rect x="75" y="177" width="1" height="1"/><rect x="75" y="179" width="1" height="1"/><rect x="75" y="181" width="1" height="1"/><rect x="75" y="183" width="1" height="1"/><rect x="75" y="185" width="1" height="1"/><rect x="75" y="187" width="1" height="1"/><rect x="75" y="189" width="1" height="1"/><rect x="75" y="191" width="1" height="1"/><rect x="75" y="193" width="1" height="1"/><rect x="75" y="195" width="1" height="1"/><rect x="75" y="197" width="1" height="1"/><rect x="75" y="199" width="1" height="1"/><rect x="75" y="201" width="1" height="1"/><rect x="75" y="203" width="1" height="1"/><rect x="75" y="205" width="1" height="1"/><rect x="75" y="207" width="1" height="1"/><rect x="75" y="209" width="1" height="1"/><rect x="75" y="211" width="1" height="1"/><rect x="75" y="213" width="1" height="1"/><rect x="75" y="215" width="1" height="1"/><rect x="75" y="217" width="1" height="1"/><rect x="75" y="219" width="1" height="1"/><rect x="75" y="221" width="1" height="1"/><rect x="75" y="223" width="1" height="1"/><rect x="75" y="225" width="1" height="1"/><rect x="75" y="227" width="1" height="1"/><rect x="75" y="229" width="1" height="1"/><rect x="75" y="231" width="1" height="1"/><rect x="75" y="233" width="1" height="1"/><rect x="75" y="235" width="1" height="1"/><rect x="75" y="237" width="1" height="1"/><rect x="75" y="239" width="1" height="1"/><rect x="75" y="241" width="1" height="1"/><rect x="75" y="243" width="1" height="1"/><rect x="75" y="245" width="1" height="1"/><rect x="75" y="247" width="1" height="1"/><rect x="75" y="249" width="1" height="1"/><rect x="75" y="251" width="1" height="1"/><rect x="75" y="253" width="1" height="1"/><rect x="75" y="255" width="1" height="1"/><rect x="75" y="257" width="1" height="1"/><rect x="75" y="259" width="1" height="1"/><rect x="75" y="261" width="1" height="1"/><rect x="75" y="263" width="1" height="1"/><rect x="75" y="265" width="1" height="1"/><rect x="75" y="267" width="1" height="1"/><rect x="75" y="269" width="1" height="1"/><rect x="75" y="271" width="1" height="1"/><rect x="75" y="273" width="1" height="1"/><rect x="75" y="275" width="1" height="1"/><rect x="75" y="277" width="1" height="1"/><rect x="75" y="279" width="1" height="1"/><rect x="75" y="281" width="1" height="1"/><rect x="75" y="283" width="1" height="1"/><rect x="75" y="285" width="1" height="1"/><rect x="75" y="287" width="1" height="1"/><rect x="75" y="289" width="1" height="1"/><rect x="75" y="291" width="1" height="1"/><rect x="75" y="293" width="1" height="1"/><rect x="75" y="295" width="1" height="1"/><rect x="75" y="297" width="1" height="1"/><rect x="75" y="299" width="1" height="1"/><rect x="75" y="301" width="1" height="1"/><rect x="75" y="303" width="1" height="1"/><rect x="75" y="305" width="1" height="1"/><rect x="75" y="307" width="1" height="1"/><rect x="75" y="309" width="1" height="1"/><rect x="75" y="311" width="1" height="1"/><rect x="75" y="313" width="1" height="1"/><rect x="75" y="315" width="1" height="1"/><rect x="75" y="317" width="1" height="1"/><rect x="75" y="319" width="1" height="1"/><rect x="75" y="321" width="1" height="1"/><rect x="75" y="323" width="1" height="1"/><rect x="75" y="325" width="1" height="1"/><rect x="75" y="327" width="1" height="1"/><rect x="75" y="329" width="1" height="1"/><rect x="75" y="331" width="1" height="1"/><rect x="75" y="333" width="1" height="1"/><rect x="75" y="335" width="1" height="1"/><rect x="75" y="337" width="1" height="1"/><rect x="75" y="339" width="1" height="1"/><rect x="75" y="341" width="1" height="1"/><rect x="75" y="343" width="1" height="1"/><rect x="75" y="345" width="1" height="1"/><rect x="75" y="347" width="1" height="1"/><rect x="75" y="349" width="1" height="1"/><rect x="75" y="351" width="1" height="1"/><rect x="75" y="353" width="1" height="1"/><rect x="75" y="355" width="1" height="1"/><rect x="75" y="357" width="1" height="1"/><rect x="75" y="359" width="1" height="1"/><rect x="75" y="361" width="1" height="1"/><rect x="75" y="363" width="1" height="1"/><rect x="75" y="365" width="1" height="1"/><rect x="75" y="367" width="1" height="1"/><rect x="75" y="369" width="1" height="1"/><rect x="75" y="371" width="1" height="1"/><rect x="75" y="373" width="1" height="1"/><rect x="75" y="375" width="1" height="1"/><rect x="75" y="377" width="1" height="1"/><rect x="75" y="379" width="1" height="1"/><rect x="75" y="381" width="1" height="1"/><rect x="75" y="383" width="1" height="1"/><rect x="75" y="385" width="1" height="1"/><rect x="75" y="387" width="1" height="1"/><rect x="75" y="389" width="1" height="1"/><rect x="75" y="391" width="1" height="1"/><rect x="75" y="393" width="1" height="1"/><rect x="75" y="395" width="1" height="1"/><rect x="75" y="397" width="1" height="1"/><rect x="75" y="399" width="1" height="1"/><rect x="75" y="401" width="1" height="1"/><rect x="75" y="403" width="1" height="1"/><rect x="75" y="405" width="1" height="1"/><rect x="75" y="407" width="1" height="1"/><rect x="75" y="409" width="1" height="1"/><rect x="75" y="411" width="1" height="1"/><rect x="75" y="413" width="1" height="1"/><rect x="75" y="415" width="1" height="1"/><rect x="75" y="417" width="1" height="1"/><rect x="75" y="419" width="1" height="1"/><rect x="75" y="421" width="1" height="1"/><rect x="75" y="423" width="1" height="1"/><rect x="75" y="449" width="1" height="1"/><rect x="75" y="451" width="1" height="1"/><rect x="75" y="453" width="1" height="1"/><rect x="75" y="455" width="1" height="1"/><rect x="75" y="457" width="1" height="1"/><rect x="75" y="459" width="1" height="1"/><rect x="75" y="461" width="1" height="1"/><rect x="75" y="463" width="1" height="1"/><rect x="75" y="465" width="1" height="1"/><rect x="75" y="467" width="1" height="1"/><rect x="75" y="469" width="1" height="1"/><rect x="75" y="471" width="1" height="1"/><rect x="75" y="473" width="1" height="1"/><rect x="75" y="475" width="1" height="1"/><rect x="75" y="477" width="1" height="1"/><rect x="75" y="479" width="1" height="1"/><rect x="75" y="481" width="1" height="1"/><rect x="75" y="483" width="1" height="1"/><rect x="75" y="485" width="1" height="1"/><rect x="75" y="487" width="1" height="1"/><rect x="75" y="489" width="1" height="1"/><rect x="75" y="491" width="1" height="1"/><rect x="75" y="493" width="1" height="1"/><rect x="75" y="495" width="1" height="1"/><rect x="75" y="497" width="1" height="1"/><rect x="75" y="499" width="1" height="1"/><rect x="75" y="501" width="1" height="1"/><rect x="75" y="503" width="1" height="1"/><rect x="75" y="505" width="1" height="1"/><rect x="75" y="507" width="1" height="1"/><rect x="75" y="509" width="1" height="1"/><rect x="75" y="511" width="1" height="1"/><rect x="75" y="513" width="1" height="1"/><rect x="75" y="515" width="1" height="1"/><rect x="75" y="517" width="1" height="1"/><rect x="75" y="519" width="1" height="1"/><rect x="75" y="521" width="1" height="1"/><rect x="75" y="523" width="1" height="1"/><rect x="75" y="525" width="1" height="1"/><rect x="75" y="527" width="1" height="1"/><rect x="75" y="529" width="1" height="1"/><rect x="75" y="531" width="1" height="1"/><rect x="75" y="533" width="1" height="1"/><rect x="75" y="535" width="1" height="1"/><rect x="75" y="537" width="1" height="1"/><rect x="75" y="539" width="1" height="1"/><rect x="75" y="541" width="1" height="1"/><rect x="75" y="543" width="1" height="1"/><rect x="75" y="545" width="1" height="1"/><rect x="75" y="547" width="1" height="1"/><rect x="75" y="549" width="1" height="1"/></g></svg><svg style="position:absolute;left:14px;top:59px;" width="9" height="9" viewBox="0 0 9 9"><defs><linearGradient id="mb" x1="0" y1="0" x2="0" y2="1"><stop offset="0" stop-color="#fff"/><stop offset="0.5" stop-color="#f4f4f4"/><stop offset="1" stop-color="#dcdcdc"/></linearGradient></defs><rect x="0.5" y="0.5" width="8" height="8" rx="1.5" fill="url(#mb)" stroke="#939393"/><rect x="2" y="4" width="5" height="1" fill="#3c5aa8"/></svg><svg style="position:absolute;left:29px;top:54px;" width="16" height="16" viewBox="0 0 16 16"><g shape-rendering="crispEdges"><rect x="2" y="0" width="14" height="2" fill="#000080"/><rect x="3" y="2" width="12" height="9" fill="#fff"/><rect x="2" y="2" width="1" height="3" fill="#000"/><rect x="15" y="2" width="1" height="10" fill="#000"/><rect x="9" y="11" width="7" height="1" fill="#000"/><rect x="1" y="5" width="6" height="7" fill="#fff"/><rect x="0" y="4" width="7" height="1" fill="#888"/><rect x="7" y="4" width="1" height="2" fill="#000"/><rect x="0" y="4" width="1" height="9" fill="#888"/><rect x="0" y="12" width="3" height="1" fill="#000"/><rect x="1" y="5" width="1" height="1" fill="#f0e020"/><rect x="3" y="5" width="1" height="1" fill="#f0e020"/><rect x="5" y="5" width="1" height="1" fill="#f0e020"/><rect x="1" y="7" width="1" height="1" fill="#f0e020"/><rect x="1" y="9" width="1" height="1" fill="#f0e020"/><rect x="1" y="11" width="1" height="1" fill="#f0e020"/><rect x="3" y="7" width="6" height="7" fill="#fff"/><rect x="2" y="6" width="7" height="1" fill="#888"/><rect x="9" y="6" width="1" height="9" fill="#000"/><rect x="2" y="6" width="1" height="9" fill="#888"/><rect x="2" y="14" width="8" height="1" fill="#000"/><rect x="4" y="8" width="4" height="1" fill="#000080"/><rect x="4" y="10" width="4" height="1" fill="#000080"/><rect x="4" y="12" width="4" height="1" fill="#000080"/></g></svg><div style="position:absolute;left:50px;top:51.84px;font-size:12px;line-height:20px;color:#000;font-weight:normal;white-space:nowrap;">Oz</div><svg style="position:absolute;left:33px;top:77px;" width="9" height="9" viewBox="0 0 9 9"><defs><linearGradient id="mb" x1="0" y1="0" x2="0" y2="1"><stop offset="0" stop-color="#fff"/><stop offset="0.5" stop-color="#f4f4f4"/><stop offset="1" stop-color="#dcdcdc"/></linearGradient></defs><rect x="0.5" y="0.5" width="8" height="8" rx="1.5" fill="url(#mb)" stroke="#939393"/><rect x="2" y="4" width="5" height="1" fill="#3c5aa8"/></svg><svg style="position:absolute;left:49px;top:72px;" width="13" height="15" viewBox="0 0 13 15"><g shape-rendering="crispEdges"><rect x="1" y="1" width="9" height="13" fill="#fff"/><rect x="10" y="3" width="2" height="11" fill="#fff"/><rect x="10" y="4" width="1" height="10" fill="#f4f4f4"/><rect x="11" y="4" width="1" height="10" fill="#e6e6e6"/><rect x="0" y="0" width="1" height="15" fill="#808080"/><rect x="0" y="0" width="10" height="1" fill="#808080"/><rect x="10" y="1" width="1" height="1" fill="#808080"/><rect x="11" y="2" width="1" height="1" fill="#808080"/><rect x="9" y="1" width="1" height="2" fill="#d0d0d0"/><rect x="10" y="2" width="1" height="1" fill="#d0d0d0"/><rect x="9" y="3" width="4" height="1" fill="#000"/><rect x="12" y="3" width="1" height="12" fill="#000"/><rect x="0" y="14" width="13" height="1" fill="#000"/><rect x="3" y="9" width="1" height="1" fill="#000"/><rect x="3" y="11" width="1" height="1" fill="#000"/><rect x="5" y="9" width="1" height="1" fill="#000"/><rect x="5" y="11" width="1" height="1" fill="#000"/><rect x="7" y="9" width="1" height="1" fill="#000"/><rect x="7" y="11" width="1" height="1" fill="#000"/><rect x="9" y="9" width="1" height="1" fill="#000"/><rect x="9" y="11" width="1" height="1" fill="#000"/><g fill="#000080"><rect x="6" y="2" width="1" height="4"/><rect x="4" y="5" width="5" height="1"/><rect x="5" y="6" width="3" height="1"/><rect x="6" y="7" width="1" height="1"/></g></g></svg><div style="position:absolute;left:69px;top:69.84px;font-size:12px;line-height:20px;color:#000;font-weight:normal;white-space:nowrap;">Sales Report</div><svg style="position:absolute;left:68px;top:90px;" width="13" height="15" viewBox="0 0 13 15"><g shape-rendering="crispEdges"><rect x="1" y="1" width="9" height="13" fill="#fff"/><rect x="10" y="3" width="2" height="11" fill="#fff"/><rect x="10" y="4" width="1" height="10" fill="#f4f4f4"/><rect x="11" y="4" width="1" height="10" fill="#e6e6e6"/><rect x="0" y="0" width="1" height="15" fill="#808080"/><rect x="0" y="0" width="10" height="1" fill="#808080"/><rect x="10" y="1" width="1" height="1" fill="#808080"/><rect x="11" y="2" width="1" height="1" fill="#808080"/><rect x="9" y="1" width="1" height="2" fill="#d0d0d0"/><rect x="10" y="2" width="1" height="1" fill="#d0d0d0"/><rect x="9" y="3" width="4" height="1" fill="#000"/><rect x="12" y="3" width="1" height="12" fill="#000"/><rect x="0" y="14" width="13" height="1" fill="#000"/><rect x="3" y="9" width="1" height="1" fill="#000"/><rect x="3" y="11" width="1" height="1" fill="#000"/><rect x="5" y="9" width="1" height="1" fill="#000"/><rect x="5" y="11" width="1" height="1" fill="#000"/><rect x="7" y="9" width="1" height="1" fill="#000"/><rect x="7" y="11" width="1" height="1" fill="#000"/><rect x="9" y="9" width="1" height="1" fill="#000"/><rect x="9" y="11" width="1" height="1" fill="#000"/></g></svg><div style="position:absolute;left:88px;top:87.84px;font-size:12px;line-height:20px;color:#000;font-weight:normal;white-space:nowrap;">Contents</div><svg style="position:absolute;left:68px;top:108px;" width="13" height="15" viewBox="0 0 13 15"><g shape-rendering="crispEdges"><rect x="1" y="1" width="9" height="13" fill="#fff"/><rect x="10" y="3" width="2" height="11" fill="#fff"/><rect x="10" y="4" width="1" height="10" fill="#f4f4f4"/><rect x="11" y="4" width="1" height="10" fill="#e6e6e6"/><rect x="0" y="0" width="1" height="15" fill="#808080"/><rect x="0" y="0" width="10" height="1" fill="#808080"/><rect x="10" y="1" width="1" height="1" fill="#808080"/><rect x="11" y="2" width="1" height="1" fill="#808080"/><rect x="9" y="1" width="1" height="2" fill="#d0d0d0"/><rect x="10" y="2" width="1" height="1" fill="#d0d0d0"/><rect x="9" y="3" width="4" height="1" fill="#000"/><rect x="12" y="3" width="1" height="12" fill="#000"/><rect x="0" y="14" width="13" height="1" fill="#000"/><rect x="3" y="9" width="1" height="1" fill="#000"/><rect x="3" y="11" width="1" height="1" fill="#000"/><rect x="5" y="9" width="1" height="1" fill="#000"/><rect x="5" y="11" width="1" height="1" fill="#000"/><rect x="7" y="9" width="1" height="1" fill="#000"/><rect x="7" y="11" width="1" height="1" fill="#000"/><rect x="9" y="9" width="1" height="1" fill="#000"/><rect x="9" y="11" width="1" height="1" fill="#000"/></g></svg><div style="position:absolute;left:88px;top:105.84px;font-size:12px;line-height:20px;color:#000;font-weight:normal;white-space:nowrap;">1. Sales Summary</div><svg style="position:absolute;left:52px;top:131px;" width="9" height="9" viewBox="0 0 9 9"><defs><linearGradient id="mb" x1="0" y1="0" x2="0" y2="1"><stop offset="0" stop-color="#fff"/><stop offset="0.5" stop-color="#f4f4f4"/><stop offset="1" stop-color="#dcdcdc"/></linearGradient></defs><rect x="0.5" y="0.5" width="8" height="8" rx="1.5" fill="url(#mb)" stroke="#939393"/><rect x="2" y="4" width="5" height="1" fill="#3c5aa8"/></svg><svg style="position:absolute;left:68px;top:126px;" width="13" height="15" viewBox="0 0 13 15"><g shape-rendering="crispEdges"><rect x="1" y="1" width="9" height="13" fill="#c0c0c0"/><rect x="10" y="3" width="2" height="11" fill="#c0c0c0"/><rect x="0" y="0" width="1" height="15" fill="#808080"/><rect x="0" y="0" width="10" height="1" fill="#808080"/><rect x="10" y="1" width="1" height="1" fill="#808080"/><rect x="11" y="2" width="1" height="1" fill="#808080"/><rect x="9" y="1" width="1" height="2" fill="#d0d0d0"/><rect x="10" y="2" width="1" height="1" fill="#d0d0d0"/><rect x="9" y="3" width="4" height="1" fill="#000"/><rect x="12" y="3" width="1" height="12" fill="#000"/><rect x="0" y="14" width="13" height="1" fill="#000"/><rect x="3" y="9" width="1" height="1" fill="#000"/><rect x="3" y="11" width="1" height="1" fill="#000"/><rect x="5" y="9" width="1" height="1" fill="#000"/><rect x="5" y="11" width="1" height="1" fill="#000"/><rect x="7" y="9" width="1" height="1" fill="#000"/><rect x="7" y="11" width="1" height="1" fill="#000"/><rect x="9" y="9" width="1" height="1" fill="#000"/><rect x="9" y="11" width="1" height="1" fill="#000"/></g></svg><div style="position:absolute;left:86px;top:125px;width:102px;height:18px;background:#3399ff;box-sizing:border-box;border:1px solid #ff9a2a;outline:1px dotted #000;outline-offset:-1px"></div><div style="position:absolute;left:88px;top:123.84px;font-size:12px;line-height:20px;color:#fff;font-weight:normal;white-space:nowrap;letter-spacing:-0.25px">2. By Sales Person</div><svg style="position:absolute;left:87px;top:144px;" width="13" height="15" viewBox="0 0 13 15"><g shape-rendering="crispEdges"><rect x="1" y="1" width="9" height="13" fill="#fff"/><rect x="10" y="3" width="2" height="11" fill="#fff"/><rect x="10" y="4" width="1" height="10" fill="#f4f4f4"/><rect x="11" y="4" width="1" height="10" fill="#e6e6e6"/><rect x="0" y="0" width="1" height="15" fill="#808080"/><rect x="0" y="0" width="10" height="1" fill="#808080"/><rect x="10" y="1" width="1" height="1" fill="#808080"/><rect x="11" y="2" width="1" height="1" fill="#808080"/><rect x="9" y="1" width="1" height="2" fill="#d0d0d0"/><rect x="10" y="2" width="1" height="1" fill="#d0d0d0"/><rect x="9" y="3" width="4" height="1" fill="#000"/><rect x="12" y="3" width="1" height="12" fill="#000"/><rect x="0" y="14" width="13" height="1" fill="#000"/><rect x="3" y="9" width="1" height="1" fill="#000"/><rect x="3" y="11" width="1" height="1" fill="#000"/><rect x="5" y="9" width="1" height="1" fill="#000"/><rect x="5" y="11" width="1" height="1" fill="#000"/><rect x="7" y="9" width="1" height="1" fill="#000"/><rect x="7" y="11" width="1" height="1" fill="#000"/><rect x="9" y="9" width="1" height="1" fill="#000"/><rect x="9" y="11" width="1" height="1" fill="#000"/></g></svg><div style="position:absolute;left:107px;top:141.84px;font-size:12px;line-height:20px;color:#000;font-weight:normal;white-space:nowrap;">Bima Malek</div><svg style="position:absolute;left:87px;top:162px;" width="13" height="15" viewBox="0 0 13 15"><g shape-rendering="crispEdges"><rect x="1" y="1" width="9" height="13" fill="#fff"/><rect x="10" y="3" width="2" height="11" fill="#fff"/><rect x="10" y="4" width="1" height="10" fill="#f4f4f4"/><rect x="11" y="4" width="1" height="10" fill="#e6e6e6"/><rect x="0" y="0" width="1" height="15" fill="#808080"/><rect x="0" y="0" width="10" height="1" fill="#808080"/><rect x="10" y="1" width="1" height="1" fill="#808080"/><rect x="11" y="2" width="1" height="1" fill="#808080"/><rect x="9" y="1" width="1" height="2" fill="#d0d0d0"/><rect x="10" y="2" width="1" height="1" fill="#d0d0d0"/><rect x="9" y="3" width="4" height="1" fill="#000"/><rect x="12" y="3" width="1" height="12" fill="#000"/><rect x="0" y="14" width="13" height="1" fill="#000"/><rect x="3" y="9" width="1" height="1" fill="#000"/><rect x="3" y="11" width="1" height="1" fill="#000"/><rect x="5" y="9" width="1" height="1" fill="#000"/><rect x="5" y="11" width="1" height="1" fill="#000"/><rect x="7" y="9" width="1" height="1" fill="#000"/><rect x="7" y="11" width="1" height="1" fill="#000"/><rect x="9" y="9" width="1" height="1" fill="#000"/><rect x="9" y="11" width="1" height="1" fill="#000"/></g></svg><div style="position:absolute;left:107px;top:159.84px;font-size:12px;line-height:20px;color:#000;font-weight:normal;white-space:nowrap;">Brad Taylor</div><svg style="position:absolute;left:87px;top:180px;" width="13" height="15" viewBox="0 0 13 15"><g shape-rendering="crispEdges"><rect x="1" y="1" width="9" height="13" fill="#fff"/><rect x="10" y="3" width="2" height="11" fill="#fff"/><rect x="10" y="4" width="1" height="10" fill="#f4f4f4"/><rect x="11" y="4" width="1" height="10" fill="#e6e6e6"/><rect x="0" y="0" width="1" height="15" fill="#808080"/><rect x="0" y="0" width="10" height="1" fill="#808080"/><rect x="10" y="1" width="1" height="1" fill="#808080"/><rect x="11" y="2" width="1" height="1" fill="#808080"/><rect x="9" y="1" width="1" height="2" fill="#d0d0d0"/><rect x="10" y="2" width="1" height="1" fill="#d0d0d0"/><rect x="9" y="3" width="4" height="1" fill="#000"/><rect x="12" y="3" width="1" height="12" fill="#000"/><rect x="0" y="14" width="13" height="1" fill="#000"/><rect x="3" y="9" width="1" height="1" fill="#000"/><rect x="3" y="11" width="1" height="1" fill="#000"/><rect x="5" y="9" width="1" height="1" fill="#000"/><rect x="5" y="11" width="1" height="1" fill="#000"/><rect x="7" y="9" width="1" height="1" fill="#000"/><rect x="7" y="11" width="1" height="1" fill="#000"/><rect x="9" y="9" width="1" height="1" fill="#000"/><rect x="9" y="11" width="1" height="1" fill="#000"/></g></svg><div style="position:absolute;left:107px;top:177.84px;font-size:12px;line-height:20px;color:#000;font-weight:normal;white-space:nowrap;">Brenda Gibson</div><svg style="position:absolute;left:87px;top:198px;" width="13" height="15" viewBox="0 0 13 15"><g shape-rendering="crispEdges"><rect x="1" y="1" width="9" height="13" fill="#fff"/><rect x="10" y="3" width="2" height="11" fill="#fff"/><rect x="10" y="4" width="1" height="10" fill="#f4f4f4"/><rect x="11" y="4" width="1" height="10" fill="#e6e6e6"/><rect x="0" y="0" width="1" height="15" fill="#808080"/><rect x="0" y="0" width="10" height="1" fill="#808080"/><rect x="10" y="1" width="1" height="1" fill="#808080"/><rect x="11" y="2" width="1" height="1" fill="#808080"/><rect x="9" y="1" width="1" height="2" fill="#d0d0d0"/><rect x="10" y="2" width="1" height="1" fill="#d0d0d0"/><rect x="9" y="3" width="4" height="1" fill="#000"/><rect x="12" y="3" width="1" height="12" fill="#000"/><rect x="0" y="14" width="13" height="1" fill="#000"/><rect x="3" y="9" width="1" height="1" fill="#000"/><rect x="3" y="11" width="1" height="1" fill="#000"/><rect x="5" y="9" width="1" height="1" fill="#000"/><rect x="5" y="11" width="1" height="1" fill="#000"/><rect x="7" y="9" width="1" height="1" fill="#000"/><rect x="7" y="11" width="1" height="1" fill="#000"/><rect x="9" y="9" width="1" height="1" fill="#000"/><rect x="9" y="11" width="1" height="1" fill="#000"/></g></svg><div style="position:absolute;left:107px;top:195.84px;font-size:12px;line-height:20px;color:#000;font-weight:normal;white-space:nowrap;">Cart Lynch</div><svg style="position:absolute;left:87px;top:216px;" width="13" height="15" viewBox="0 0 13 15"><g shape-rendering="crispEdges"><rect x="1" y="1" width="9" height="13" fill="#fff"/><rect x="10" y="3" width="2" height="11" fill="#fff"/><rect x="10" y="4" width="1" height="10" fill="#f4f4f4"/><rect x="11" y="4" width="1" height="10" fill="#e6e6e6"/><rect x="0" y="0" width="1" height="15" fill="#808080"/><rect x="0" y="0" width="10" height="1" fill="#808080"/><rect x="10" y="1" width="1" height="1" fill="#808080"/><rect x="11" y="2" width="1" height="1" fill="#808080"/><rect x="9" y="1" width="1" height="2" fill="#d0d0d0"/><rect x="10" y="2" width="1" height="1" fill="#d0d0d0"/><rect x="9" y="3" width="4" height="1" fill="#000"/><rect x="12" y="3" width="1" height="12" fill="#000"/><rect x="0" y="14" width="13" height="1" fill="#000"/><rect x="3" y="9" width="1" height="1" fill="#000"/><rect x="3" y="11" width="1" height="1" fill="#000"/><rect x="5" y="9" width="1" height="1" fill="#000"/><rect x="5" y="11" width="1" height="1" fill="#000"/><rect x="7" y="9" width="1" height="1" fill="#000"/><rect x="7" y="11" width="1" height="1" fill="#000"/><rect x="9" y="9" width="1" height="1" fill="#000"/><rect x="9" y="11" width="1" height="1" fill="#000"/></g></svg><div style="position:absolute;left:107px;top:213.84px;font-size:12px;line-height:20px;color:#000;font-weight:normal;white-space:nowrap;">Craig Amundson</div><svg style="position:absolute;left:87px;top:234px;" width="13" height="15" viewBox="0 0 13 15"><g shape-rendering="crispEdges"><rect x="1" y="1" width="9" height="13" fill="#fff"/><rect x="10" y="3" width="2" height="11" fill="#fff"/><rect x="10" y="4" width="1" height="10" fill="#f4f4f4"/><rect x="11" y="4" width="1" height="10" fill="#e6e6e6"/><rect x="0" y="0" width="1" height="15" fill="#808080"/><rect x="0" y="0" width="10" height="1" fill="#808080"/><rect x="10" y="1" width="1" height="1" fill="#808080"/><rect x="11" y="2" width="1" height="1" fill="#808080"/><rect x="9" y="1" width="1" height="2" fill="#d0d0d0"/><rect x="10" y="2" width="1" height="1" fill="#d0d0d0"/><rect x="9" y="3" width="4" height="1" fill="#000"/><rect x="12" y="3" width="1" height="12" fill="#000"/><rect x="0" y="14" width="13" height="1" fill="#000"/><rect x="3" y="9" width="1" height="1" fill="#000"/><rect x="3" y="11" width="1" height="1" fill="#000"/><rect x="5" y="9" width="1" height="1" fill="#000"/><rect x="5" y="11" width="1" height="1" fill="#000"/><rect x="7" y="9" width="1" height="1" fill="#000"/><rect x="7" y="11" width="1" height="1" fill="#000"/><rect x="9" y="9" width="1" height="1" fill="#000"/><rect x="9" y="11" width="1" height="1" fill="#000"/></g></svg><div style="position:absolute;left:107px;top:231.84px;font-size:12px;line-height:20px;color:#000;font-weight:normal;white-space:nowrap;">Jimmie Holley</div><svg style="position:absolute;left:87px;top:252px;" width="13" height="15" viewBox="0 0 13 15"><g shape-rendering="crispEdges"><rect x="1" y="1" width="9" height="13" fill="#fff"/><rect x="10" y="3" width="2" height="11" fill="#fff"/><rect x="10" y="4" width="1" height="10" fill="#f4f4f4"/><rect x="11" y="4" width="1" height="10" fill="#e6e6e6"/><rect x="0" y="0" width="1" height="15" fill="#808080"/><rect x="0" y="0" width="10" height="1" fill="#808080"/><rect x="10" y="1" width="1" height="1" fill="#808080"/><rect x="11" y="2" width="1" height="1" fill="#808080"/><rect x="9" y="1" width="1" height="2" fill="#d0d0d0"/><rect x="10" y="2" width="1" height="1" fill="#d0d0d0"/><rect x="9" y="3" width="4" height="1" fill="#000"/><rect x="12" y="3" width="1" height="12" fill="#000"/><rect x="0" y="14" width="13" height="1" fill="#000"/><rect x="3" y="9" width="1" height="1" fill="#000"/><rect x="3" y="11" width="1" height="1" fill="#000"/><rect x="5" y="9" width="1" height="1" fill="#000"/><rect x="5" y="11" width="1" height="1" fill="#000"/><rect x="7" y="9" width="1" height="1" fill="#000"/><rect x="7" y="11" width="1" height="1" fill="#000"/><rect x="9" y="9" width="1" height="1" fill="#000"/><rect x="9" y="11" width="1" height="1" fill="#000"/></g></svg><div style="position:absolute;left:107px;top:249.84px;font-size:12px;line-height:20px;color:#000;font-weight:normal;white-space:nowrap;">John Davis</div><svg style="position:absolute;left:87px;top:270px;" width="13" height="15" viewBox="0 0 13 15"><g shape-rendering="crispEdges"><rect x="1" y="1" width="9" height="13" fill="#fff"/><rect x="10" y="3" width="2" height="11" fill="#fff"/><rect x="10" y="4" width="1" height="10" fill="#f4f4f4"/><rect x="11" y="4" width="1" height="10" fill="#e6e6e6"/><rect x="0" y="0" width="1" height="15" fill="#808080"/><rect x="0" y="0" width="10" height="1" fill="#808080"/><rect x="10" y="1" width="1" height="1" fill="#808080"/><rect x="11" y="2" width="1" height="1" fill="#808080"/><rect x="9" y="1" width="1" height="2" fill="#d0d0d0"/><rect x="10" y="2" width="1" height="1" fill="#d0d0d0"/><rect x="9" y="3" width="4" height="1" fill="#000"/><rect x="12" y="3" width="1" height="12" fill="#000"/><rect x="0" y="14" width="13" height="1" fill="#000"/><rect x="3" y="9" width="1" height="1" fill="#000"/><rect x="3" y="11" width="1" height="1" fill="#000"/><rect x="5" y="9" width="1" height="1" fill="#000"/><rect x="5" y="11" width="1" height="1" fill="#000"/><rect x="7" y="9" width="1" height="1" fill="#000"/><rect x="7" y="11" width="1" height="1" fill="#000"/><rect x="9" y="9" width="1" height="1" fill="#000"/><rect x="9" y="11" width="1" height="1" fill="#000"/></g></svg><div style="position:absolute;left:107px;top:267.84px;font-size:12px;line-height:20px;color:#000;font-weight:normal;white-space:nowrap;">Jose Bowen</div><svg style="position:absolute;left:87px;top:288px;" width="13" height="15" viewBox="0 0 13 15"><g shape-rendering="crispEdges"><rect x="1" y="1" width="9" height="13" fill="#fff"/><rect x="10" y="3" width="2" height="11" fill="#fff"/><rect x="10" y="4" width="1" height="10" fill="#f4f4f4"/><rect x="11" y="4" width="1" height="10" fill="#e6e6e6"/><rect x="0" y="0" width="1" height="15" fill="#808080"/><rect x="0" y="0" width="10" height="1" fill="#808080"/><rect x="10" y="1" width="1" height="1" fill="#808080"/><rect x="11" y="2" width="1" height="1" fill="#808080"/><rect x="9" y="1" width="1" height="2" fill="#d0d0d0"/><rect x="10" y="2" width="1" height="1" fill="#d0d0d0"/><rect x="9" y="3" width="4" height="1" fill="#000"/><rect x="12" y="3" width="1" height="12" fill="#000"/><rect x="0" y="14" width="13" height="1" fill="#000"/><rect x="3" y="9" width="1" height="1" fill="#000"/><rect x="3" y="11" width="1" height="1" fill="#000"/><rect x="5" y="9" width="1" height="1" fill="#000"/><rect x="5" y="11" width="1" height="1" fill="#000"/><rect x="7" y="9" width="1" height="1" fill="#000"/><rect x="7" y="11" width="1" height="1" fill="#000"/><rect x="9" y="9" width="1" height="1" fill="#000"/><rect x="9" y="11" width="1" height="1" fill="#000"/></g></svg><div style="position:absolute;left:107px;top:285.84px;font-size:12px;line-height:20px;color:#000;font-weight:normal;white-space:nowrap;">Karl Anderson</div><svg style="position:absolute;left:87px;top:306px;" width="13" height="15" viewBox="0 0 13 15"><g shape-rendering="crispEdges"><rect x="1" y="1" width="9" height="13" fill="#fff"/><rect x="10" y="3" width="2" height="11" fill="#fff"/><rect x="10" y="4" width="1" height="10" fill="#f4f4f4"/><rect x="11" y="4" width="1" height="10" fill="#e6e6e6"/><rect x="0" y="0" width="1" height="15" fill="#808080"/><rect x="0" y="0" width="10" height="1" fill="#808080"/><rect x="10" y="1" width="1" height="1" fill="#808080"/><rect x="11" y="2" width="1" height="1" fill="#808080"/><rect x="9" y="1" width="1" height="2" fill="#d0d0d0"/><rect x="10" y="2" width="1" height="1" fill="#d0d0d0"/><rect x="9" y="3" width="4" height="1" fill="#000"/><rect x="12" y="3" width="1" height="12" fill="#000"/><rect x="0" y="14" width="13" height="1" fill="#000"/><rect x="3" y="9" width="1" height="1" fill="#000"/><rect x="3" y="11" width="1" height="1" fill="#000"/><rect x="5" y="9" width="1" height="1" fill="#000"/><rect x="5" y="11" width="1" height="1" fill="#000"/><rect x="7" y="9" width="1" height="1" fill="#000"/><rect x="7" y="11" width="1" height="1" fill="#000"/><rect x="9" y="9" width="1" height="1" fill="#000"/><rect x="9" y="11" width="1" height="1" fill="#000"/></g></svg><div style="position:absolute;left:107px;top:303.84px;font-size:12px;line-height:20px;color:#000;font-weight:normal;white-space:nowrap;">Kathy Clinton</div><svg style="position:absolute;left:87px;top:324px;" width="13" height="15" viewBox="0 0 13 15"><g shape-rendering="crispEdges"><rect x="1" y="1" width="9" height="13" fill="#fff"/><rect x="10" y="3" width="2" height="11" fill="#fff"/><rect x="10" y="4" width="1" height="10" fill="#f4f4f4"/><rect x="11" y="4" width="1" height="10" fill="#e6e6e6"/><rect x="0" y="0" width="1" height="15" fill="#808080"/><rect x="0" y="0" width="10" height="1" fill="#808080"/><rect x="10" y="1" width="1" height="1" fill="#808080"/><rect x="11" y="2" width="1" height="1" fill="#808080"/><rect x="9" y="1" width="1" height="2" fill="#d0d0d0"/><rect x="10" y="2" width="1" height="1" fill="#d0d0d0"/><rect x="9" y="3" width="4" height="1" fill="#000"/><rect x="12" y="3" width="1" height="12" fill="#000"/><rect x="0" y="14" width="13" height="1" fill="#000"/><rect x="3" y="9" width="1" height="1" fill="#000"/><rect x="3" y="11" width="1" height="1" fill="#000"/><rect x="5" y="9" width="1" height="1" fill="#000"/><rect x="5" y="11" width="1" height="1" fill="#000"/><rect x="7" y="9" width="1" height="1" fill="#000"/><rect x="7" y="11" width="1" height="1" fill="#000"/><rect x="9" y="9" width="1" height="1" fill="#000"/><rect x="9" y="11" width="1" height="1" fill="#000"/></g></svg><div style="position:absolute;left:107px;top:321.84px;font-size:12px;line-height:20px;color:#000;font-weight:normal;white-space:nowrap;">Lee Chin</div><svg style="position:absolute;left:87px;top:342px;" width="13" height="15" viewBox="0 0 13 15"><g shape-rendering="crispEdges"><rect x="1" y="1" width="9" height="13" fill="#fff"/><rect x="10" y="3" width="2" height="11" fill="#fff"/><rect x="10" y="4" width="1" height="10" fill="#f4f4f4"/><rect x="11" y="4" width="1" height="10" fill="#e6e6e6"/><rect x="0" y="0" width="1" height="15" fill="#808080"/><rect x="0" y="0" width="10" height="1" fill="#808080"/><rect x="10" y="1" width="1" height="1" fill="#808080"/><rect x="11" y="2" width="1" height="1" fill="#808080"/><rect x="9" y="1" width="1" height="2" fill="#d0d0d0"/><rect x="10" y="2" width="1" height="1" fill="#d0d0d0"/><rect x="9" y="3" width="4" height="1" fill="#000"/><rect x="12" y="3" width="1" height="12" fill="#000"/><rect x="0" y="14" width="13" height="1" fill="#000"/><rect x="3" y="9" width="1" height="1" fill="#000"/><rect x="3" y="11" width="1" height="1" fill="#000"/><rect x="5" y="9" width="1" height="1" fill="#000"/><rect x="5" y="11" width="1" height="1" fill="#000"/><rect x="7" y="9" width="1" height="1" fill="#000"/><rect x="7" y="11" width="1" height="1" fill="#000"/><rect x="9" y="9" width="1" height="1" fill="#000"/><rect x="9" y="11" width="1" height="1" fill="#000"/></g></svg><div style="position:absolute;left:107px;top:339.84px;font-size:12px;line-height:20px;color:#000;font-weight:normal;white-space:nowrap;">Max Blagburn</div><svg style="position:absolute;left:87px;top:360px;" width="13" height="15" viewBox="0 0 13 15"><g shape-rendering="crispEdges"><rect x="1" y="1" width="9" height="13" fill="#fff"/><rect x="10" y="3" width="2" height="11" fill="#fff"/><rect x="10" y="4" width="1" height="10" fill="#f4f4f4"/><rect x="11" y="4" width="1" height="10" fill="#e6e6e6"/><rect x="0" y="0" width="1" height="15" fill="#808080"/><rect x="0" y="0" width="10" height="1" fill="#808080"/><rect x="10" y="1" width="1" height="1" fill="#808080"/><rect x="11" y="2" width="1" height="1" fill="#808080"/><rect x="9" y="1" width="1" height="2" fill="#d0d0d0"/><rect x="10" y="2" width="1" height="1" fill="#d0d0d0"/><rect x="9" y="3" width="4" height="1" fill="#000"/><rect x="12" y="3" width="1" height="12" fill="#000"/><rect x="0" y="14" width="13" height="1" fill="#000"/><rect x="3" y="9" width="1" height="1" fill="#000"/><rect x="3" y="11" width="1" height="1" fill="#000"/><rect x="5" y="9" width="1" height="1" fill="#000"/><rect x="5" y="11" width="1" height="1" fill="#000"/><rect x="7" y="9" width="1" height="1" fill="#000"/><rect x="7" y="11" width="1" height="1" fill="#000"/><rect x="9" y="9" width="1" height="1" fill="#000"/><rect x="9" y="11" width="1" height="1" fill="#000"/></g></svg><div style="position:absolute;left:107px;top:357.84px;font-size:12px;line-height:20px;color:#000;font-weight:normal;white-space:nowrap;">Micheal Williams</div><svg style="position:absolute;left:87px;top:378px;" width="13" height="15" viewBox="0 0 13 15"><g shape-rendering="crispEdges"><rect x="1" y="1" width="9" height="13" fill="#fff"/><rect x="10" y="3" width="2" height="11" fill="#fff"/><rect x="10" y="4" width="1" height="10" fill="#f4f4f4"/><rect x="11" y="4" width="1" height="10" fill="#e6e6e6"/><rect x="0" y="0" width="1" height="15" fill="#808080"/><rect x="0" y="0" width="10" height="1" fill="#808080"/><rect x="10" y="1" width="1" height="1" fill="#808080"/><rect x="11" y="2" width="1" height="1" fill="#808080"/><rect x="9" y="1" width="1" height="2" fill="#d0d0d0"/><rect x="10" y="2" width="1" height="1" fill="#d0d0d0"/><rect x="9" y="3" width="4" height="1" fill="#000"/><rect x="12" y="3" width="1" height="12" fill="#000"/><rect x="0" y="14" width="13" height="1" fill="#000"/><rect x="3" y="9" width="1" height="1" fill="#000"/><rect x="3" y="11" width="1" height="1" fill="#000"/><rect x="5" y="9" width="1" height="1" fill="#000"/><rect x="5" y="11" width="1" height="1" fill="#000"/><rect x="7" y="9" width="1" height="1" fill="#000"/><rect x="7" y="11" width="1" height="1" fill="#000"/><rect x="9" y="9" width="1" height="1" fill="#000"/><rect x="9" y="11" width="1" height="1" fill="#000"/></g></svg><div style="position:absolute;left:107px;top:375.84px;font-size:12px;line-height:20px;color:#000;font-weight:normal;white-space:nowrap;">Molly McKenzie</div><svg style="position:absolute;left:87px;top:396px;" width="13" height="15" viewBox="0 0 13 15"><g shape-rendering="crispEdges"><rect x="1" y="1" width="9" height="13" fill="#fff"/><rect x="10" y="3" width="2" height="11" fill="#fff"/><rect x="10" y="4" width="1" height="10" fill="#f4f4f4"/><rect x="11" y="4" width="1" height="10" fill="#e6e6e6"/><rect x="0" y="0" width="1" height="15" fill="#808080"/><rect x="0" y="0" width="10" height="1" fill="#808080"/><rect x="10" y="1" width="1" height="1" fill="#808080"/><rect x="11" y="2" width="1" height="1" fill="#808080"/><rect x="9" y="1" width="1" height="2" fill="#d0d0d0"/><rect x="10" y="2" width="1" height="1" fill="#d0d0d0"/><rect x="9" y="3" width="4" height="1" fill="#000"/><rect x="12" y="3" width="1" height="12" fill="#000"/><rect x="0" y="14" width="13" height="1" fill="#000"/><rect x="3" y="9" width="1" height="1" fill="#000"/><rect x="3" y="11" width="1" height="1" fill="#000"/><rect x="5" y="9" width="1" height="1" fill="#000"/><rect x="5" y="11" width="1" height="1" fill="#000"/><rect x="7" y="9" width="1" height="1" fill="#000"/><rect x="7" y="11" width="1" height="1" fill="#000"/><rect x="9" y="9" width="1" height="1" fill="#000"/><rect x="9" y="11" width="1" height="1" fill="#000"/></g></svg><div style="position:absolute;left:107px;top:393.84px;font-size:12px;line-height:20px;color:#000;font-weight:normal;white-space:nowrap;">Ruth Sakas</div><svg style="position:absolute;left:87px;top:414px;" width="13" height="15" viewBox="0 0 13 15"><g shape-rendering="crispEdges"><rect x="1" y="1" width="9" height="13" fill="#fff"/><rect x="10" y="3" width="2" height="11" fill="#fff"/><rect x="10" y="4" width="1" height="10" fill="#f4f4f4"/><rect x="11" y="4" width="1" height="10" fill="#e6e6e6"/><rect x="0" y="0" width="1" height="15" fill="#808080"/><rect x="0" y="0" width="10" height="1" fill="#808080"/><rect x="10" y="1" width="1" height="1" fill="#808080"/><rect x="11" y="2" width="1" height="1" fill="#808080"/><rect x="9" y="1" width="1" height="2" fill="#d0d0d0"/><rect x="10" y="2" width="1" height="1" fill="#d0d0d0"/><rect x="9" y="3" width="4" height="1" fill="#000"/><rect x="12" y="3" width="1" height="12" fill="#000"/><rect x="0" y="14" width="13" height="1" fill="#000"/><rect x="3" y="9" width="1" height="1" fill="#000"/><rect x="3" y="11" width="1" height="1" fill="#000"/><rect x="5" y="9" width="1" height="1" fill="#000"/><rect x="5" y="11" width="1" height="1" fill="#000"/><rect x="7" y="9" width="1" height="1" fill="#000"/><rect x="7" y="11" width="1" height="1" fill="#000"/><rect x="9" y="9" width="1" height="1" fill="#000"/><rect x="9" y="11" width="1" height="1" fill="#000"/></g></svg><div style="position:absolute;left:107px;top:411.84px;font-size:12px;line-height:20px;color:#000;font-weight:normal;white-space:nowrap;">Sandra Barone</div><svg style="position:absolute;left:52px;top:437px;" width="9" height="9" viewBox="0 0 9 9"><defs><linearGradient id="mb" x1="0" y1="0" x2="0" y2="1"><stop offset="0" stop-color="#fff"/><stop offset="0.5" stop-color="#f4f4f4"/><stop offset="1" stop-color="#dcdcdc"/></linearGradient></defs><rect x="0.5" y="0.5" width="8" height="8" rx="1.5" fill="url(#mb)" stroke="#939393"/><rect x="2" y="4" width="5" height="1" fill="#3c5aa8"/></svg><svg style="position:absolute;left:68px;top:432px;" width="13" height="15" viewBox="0 0 13 15"><g shape-rendering="crispEdges"><rect x="1" y="1" width="9" height="13" fill="#fff"/><rect x="10" y="3" width="2" height="11" fill="#fff"/><rect x="10" y="4" width="1" height="10" fill="#f4f4f4"/><rect x="11" y="4" width="1" height="10" fill="#e6e6e6"/><rect x="0" y="0" width="1" height="15" fill="#808080"/><rect x="0" y="0" width="10" height="1" fill="#808080"/><rect x="10" y="1" width="1" height="1" fill="#808080"/><rect x="11" y="2" width="1" height="1" fill="#808080"/><rect x="9" y="1" width="1" height="2" fill="#d0d0d0"/><rect x="10" y="2" width="1" height="1" fill="#d0d0d0"/><rect x="9" y="3" width="4" height="1" fill="#000"/><rect x="12" y="3" width="1" height="12" fill="#000"/><rect x="0" y="14" width="13" height="1" fill="#000"/><rect x="3" y="9" width="1" height="1" fill="#000"/><rect x="3" y="11" width="1" height="1" fill="#000"/><rect x="5" y="9" width="1" height="1" fill="#000"/><rect x="5" y="11" width="1" height="1" fill="#000"/><rect x="7" y="9" width="1" height="1" fill="#000"/><rect x="7" y="11" width="1" height="1" fill="#000"/><rect x="9" y="9" width="1" height="1" fill="#000"/><rect x="9" y="11" width="1" height="1" fill="#000"/></g></svg><div style="position:absolute;left:88px;top:429.84px;font-size:12px;line-height:20px;color:#000;font-weight:normal;white-space:nowrap;">3. By Country</div><svg style="position:absolute;left:87px;top:450px;" width="13" height="15" viewBox="0 0 13 15"><g shape-rendering="crispEdges"><rect x="1" y="1" width="9" height="13" fill="#fff"/><rect x="10" y="3" width="2" height="11" fill="#fff"/><rect x="10" y="4" width="1" height="10" fill="#f4f4f4"/><rect x="11" y="4" width="1" height="10" fill="#e6e6e6"/><rect x="0" y="0" width="1" height="15" fill="#808080"/><rect x="0" y="0" width="10" height="1" fill="#808080"/><rect x="10" y="1" width="1" height="1" fill="#808080"/><rect x="11" y="2" width="1" height="1" fill="#808080"/><rect x="9" y="1" width="1" height="2" fill="#d0d0d0"/><rect x="10" y="2" width="1" height="1" fill="#d0d0d0"/><rect x="9" y="3" width="4" height="1" fill="#000"/><rect x="12" y="3" width="1" height="12" fill="#000"/><rect x="0" y="14" width="13" height="1" fill="#000"/><rect x="3" y="9" width="1" height="1" fill="#000"/><rect x="3" y="11" width="1" height="1" fill="#000"/><rect x="5" y="9" width="1" height="1" fill="#000"/><rect x="5" y="11" width="1" height="1" fill="#000"/><rect x="7" y="9" width="1" height="1" fill="#000"/><rect x="7" y="11" width="1" height="1" fill="#000"/><rect x="9" y="9" width="1" height="1" fill="#000"/><rect x="9" y="11" width="1" height="1" fill="#000"/></g></svg><div style="position:absolute;left:107px;top:447.84px;font-size:12px;line-height:20px;color:#000;font-weight:normal;white-space:nowrap;">Australia</div><svg style="position:absolute;left:87px;top:468px;" width="13" height="15" viewBox="0 0 13 15"><g shape-rendering="crispEdges"><rect x="1" y="1" width="9" height="13" fill="#fff"/><rect x="10" y="3" width="2" height="11" fill="#fff"/><rect x="10" y="4" width="1" height="10" fill="#f4f4f4"/><rect x="11" y="4" width="1" height="10" fill="#e6e6e6"/><rect x="0" y="0" width="1" height="15" fill="#808080"/><rect x="0" y="0" width="10" height="1" fill="#808080"/><rect x="10" y="1" width="1" height="1" fill="#808080"/><rect x="11" y="2" width="1" height="1" fill="#808080"/><rect x="9" y="1" width="1" height="2" fill="#d0d0d0"/><rect x="10" y="2" width="1" height="1" fill="#d0d0d0"/><rect x="9" y="3" width="4" height="1" fill="#000"/><rect x="12" y="3" width="1" height="12" fill="#000"/><rect x="0" y="14" width="13" height="1" fill="#000"/><rect x="3" y="9" width="1" height="1" fill="#000"/><rect x="3" y="11" width="1" height="1" fill="#000"/><rect x="5" y="9" width="1" height="1" fill="#000"/><rect x="5" y="11" width="1" height="1" fill="#000"/><rect x="7" y="9" width="1" height="1" fill="#000"/><rect x="7" y="11" width="1" height="1" fill="#000"/><rect x="9" y="9" width="1" height="1" fill="#000"/><rect x="9" y="11" width="1" height="1" fill="#000"/></g></svg><div style="position:absolute;left:107px;top:465.84px;font-size:12px;line-height:20px;color:#000;font-weight:normal;white-space:nowrap;">Canada</div><svg style="position:absolute;left:87px;top:486px;" width="13" height="15" viewBox="0 0 13 15"><g shape-rendering="crispEdges"><rect x="1" y="1" width="9" height="13" fill="#fff"/><rect x="10" y="3" width="2" height="11" fill="#fff"/><rect x="10" y="4" width="1" height="10" fill="#f4f4f4"/><rect x="11" y="4" width="1" height="10" fill="#e6e6e6"/><rect x="0" y="0" width="1" height="15" fill="#808080"/><rect x="0" y="0" width="10" height="1" fill="#808080"/><rect x="10" y="1" width="1" height="1" fill="#808080"/><rect x="11" y="2" width="1" height="1" fill="#808080"/><rect x="9" y="1" width="1" height="2" fill="#d0d0d0"/><rect x="10" y="2" width="1" height="1" fill="#d0d0d0"/><rect x="9" y="3" width="4" height="1" fill="#000"/><rect x="12" y="3" width="1" height="12" fill="#000"/><rect x="0" y="14" width="13" height="1" fill="#000"/><rect x="3" y="9" width="1" height="1" fill="#000"/><rect x="3" y="11" width="1" height="1" fill="#000"/><rect x="5" y="9" width="1" height="1" fill="#000"/><rect x="5" y="11" width="1" height="1" fill="#000"/><rect x="7" y="9" width="1" height="1" fill="#000"/><rect x="7" y="11" width="1" height="1" fill="#000"/><rect x="9" y="9" width="1" height="1" fill="#000"/><rect x="9" y="11" width="1" height="1" fill="#000"/></g></svg><div style="position:absolute;left:107px;top:483.84px;font-size:12px;line-height:20px;color:#000;font-weight:normal;white-space:nowrap;">France</div><svg style="position:absolute;left:87px;top:504px;" width="13" height="15" viewBox="0 0 13 15"><g shape-rendering="crispEdges"><rect x="1" y="1" width="9" height="13" fill="#fff"/><rect x="10" y="3" width="2" height="11" fill="#fff"/><rect x="10" y="4" width="1" height="10" fill="#f4f4f4"/><rect x="11" y="4" width="1" height="10" fill="#e6e6e6"/><rect x="0" y="0" width="1" height="15" fill="#808080"/><rect x="0" y="0" width="10" height="1" fill="#808080"/><rect x="10" y="1" width="1" height="1" fill="#808080"/><rect x="11" y="2" width="1" height="1" fill="#808080"/><rect x="9" y="1" width="1" height="2" fill="#d0d0d0"/><rect x="10" y="2" width="1" height="1" fill="#d0d0d0"/><rect x="9" y="3" width="4" height="1" fill="#000"/><rect x="12" y="3" width="1" height="12" fill="#000"/><rect x="0" y="14" width="13" height="1" fill="#000"/><rect x="3" y="9" width="1" height="1" fill="#000"/><rect x="3" y="11" width="1" height="1" fill="#000"/><rect x="5" y="9" width="1" height="1" fill="#000"/><rect x="5" y="11" width="1" height="1" fill="#000"/><rect x="7" y="9" width="1" height="1" fill="#000"/><rect x="7" y="11" width="1" height="1" fill="#000"/><rect x="9" y="9" width="1" height="1" fill="#000"/><rect x="9" y="11" width="1" height="1" fill="#000"/></g></svg><div style="position:absolute;left:107px;top:501.84px;font-size:12px;line-height:20px;color:#000;font-weight:normal;white-space:nowrap;">Germany</div><svg style="position:absolute;left:87px;top:522px;" width="13" height="15" viewBox="0 0 13 15"><g shape-rendering="crispEdges"><rect x="1" y="1" width="9" height="13" fill="#fff"/><rect x="10" y="3" width="2" height="11" fill="#fff"/><rect x="10" y="4" width="1" height="10" fill="#f4f4f4"/><rect x="11" y="4" width="1" height="10" fill="#e6e6e6"/><rect x="0" y="0" width="1" height="15" fill="#808080"/><rect x="0" y="0" width="10" height="1" fill="#808080"/><rect x="10" y="1" width="1" height="1" fill="#808080"/><rect x="11" y="2" width="1" height="1" fill="#808080"/><rect x="9" y="1" width="1" height="2" fill="#d0d0d0"/><rect x="10" y="2" width="1" height="1" fill="#d0d0d0"/><rect x="9" y="3" width="4" height="1" fill="#000"/><rect x="12" y="3" width="1" height="12" fill="#000"/><rect x="0" y="14" width="13" height="1" fill="#000"/><rect x="3" y="9" width="1" height="1" fill="#000"/><rect x="3" y="11" width="1" height="1" fill="#000"/><rect x="5" y="9" width="1" height="1" fill="#000"/><rect x="5" y="11" width="1" height="1" fill="#000"/><rect x="7" y="9" width="1" height="1" fill="#000"/><rect x="7" y="11" width="1" height="1" fill="#000"/><rect x="9" y="9" width="1" height="1" fill="#000"/><rect x="9" y="11" width="1" height="1" fill="#000"/></g></svg><div style="position:absolute;left:107px;top:519.84px;font-size:12px;line-height:20px;color:#000;font-weight:normal;white-space:nowrap;">United Kingdom</div><svg style="position:absolute;left:87px;top:540px;" width="13" height="15" viewBox="0 0 13 15"><g shape-rendering="crispEdges"><rect x="1" y="1" width="9" height="13" fill="#fff"/><rect x="10" y="3" width="2" height="11" fill="#fff"/><rect x="10" y="4" width="1" height="10" fill="#f4f4f4"/><rect x="11" y="4" width="1" height="10" fill="#e6e6e6"/><rect x="0" y="0" width="1" height="15" fill="#808080"/><rect x="0" y="0" width="10" height="1" fill="#808080"/><rect x="10" y="1" width="1" height="1" fill="#808080"/><rect x="11" y="2" width="1" height="1" fill="#808080"/><rect x="9" y="1" width="1" height="2" fill="#d0d0d0"/><rect x="10" y="2" width="1" height="1" fill="#d0d0d0"/><rect x="9" y="3" width="4" height="1" fill="#000"/><rect x="12" y="3" width="1" height="12" fill="#000"/><rect x="0" y="14" width="13" height="1" fill="#000"/><rect x="3" y="9" width="1" height="1" fill="#000"/><rect x="3" y="11" width="1" height="1" fill="#000"/><rect x="5" y="9" width="1" height="1" fill="#000"/><rect x="5" y="11" width="1" height="1" fill="#000"/><rect x="7" y="9" width="1" height="1" fill="#000"/><rect x="7" y="11" width="1" height="1" fill="#000"/><rect x="9" y="9" width="1" height="1" fill="#000"/><rect x="9" y="11" width="1" height="1" fill="#000"/></g></svg><div style="position:absolute;left:107px;top:537.84px;font-size:12px;line-height:20px;color:#000;font-weight:normal;white-space:nowrap;">United States</div><svg style="position:absolute;left:52px;top:563px;" width="9" height="9" viewBox="0 0 9 9"><defs><linearGradient id="mb" x1="0" y1="0" x2="0" y2="1"><stop offset="0" stop-color="#fff"/><stop offset="0.5" stop-color="#f4f4f4"/><stop offset="1" stop-color="#dcdcdc"/></linearGradient></defs><rect x="0.5" y="0.5" width="8" height="8" rx="1.5" fill="url(#mb)" stroke="#939393"/><rect x="2" y="4" width="5" height="1" fill="#3c5aa8"/></svg><svg style="position:absolute;left:68px;top:558px;" width="13" height="15" viewBox="0 0 13 15"><g shape-rendering="crispEdges"><rect x="1" y="1" width="9" height="13" fill="#fff"/><rect x="10" y="3" width="2" height="11" fill="#fff"/><rect x="10" y="4" width="1" height="10" fill="#f4f4f4"/><rect x="11" y="4" width="1" height="10" fill="#e6e6e6"/><rect x="0" y="0" width="1" height="15" fill="#808080"/><rect x="0" y="0" width="10" height="1" fill="#808080"/><rect x="10" y="1" width="1" height="1" fill="#808080"/><rect x="11" y="2" width="1" height="1" fill="#808080"/><rect x="9" y="1" width="1" height="2" fill="#d0d0d0"/><rect x="10" y="2" width="1" height="1" fill="#d0d0d0"/><rect x="9" y="3" width="4" height="1" fill="#000"/><rect x="12" y="3" width="1" height="12" fill="#000"/><rect x="0" y="14" width="13" height="1" fill="#000"/><rect x="3" y="9" width="1" height="1" fill="#000"/><rect x="3" y="11" width="1" height="1" fill="#000"/><rect x="5" y="9" width="1" height="1" fill="#000"/><rect x="5" y="11" width="1" height="1" fill="#000"/><rect x="7" y="9" width="1" height="1" fill="#000"/><rect x="7" y="11" width="1" height="1" fill="#000"/><rect x="9" y="9" width="1" height="1" fill="#000"/><rect x="9" y="11" width="1" height="1" fill="#000"/></g></svg><div style="position:absolute;left:88px;top:555.84px;font-size:12px;line-height:20px;color:#000;font-weight:normal;white-space:nowrap;">4. By Category</div><div style="position:absolute;left:275px;top:83.50px;font-size:13px;line-height:20px;color:#8a0000;font-weight:bold;white-space:nowrap;letter-spacing:0.22px">OZ Basic Report Education/TOC Link Report</div><div style="position:absolute;left:273px;top:102px;width:585px;height:1px;background:#808080"></div><div style="position:absolute;left:275px;top:116.55px;font-size:21.5px;line-height:20px;color:#000;font-weight:bold;white-space:nowrap;letter-spacing:0px">2. By Sales Person</div><div style="position:absolute;left:276px;top:156.50px;font-size:13px;line-height:20px;color:#3636a6;font-weight:bold;white-space:nowrap;letter-spacing:0.5px">Bima Malek</div><div style="position:absolute;left:276px;top:182px;width:579px;height:26px;background:#e9e9e9"></div><div style="position:absolute;left:279.0px;width:100px;text-align:center;top:183.67px;font-size:12.5px;line-height:20px;color:#000;font-weight:normal;white-space:nowrap;">Country</div><div style="position:absolute;left:387.5px;width:120px;text-align:center;top:183.67px;font-size:12.5px;line-height:20px;color:#000;font-weight:normal;white-space:nowrap;">CategoryName</div><div style="position:absolute;left:512.0px;width:60px;text-align:center;top:183.67px;font-size:12.5px;line-height:20px;color:#000;font-weight:normal;white-space:nowrap;">NOrders</div><div style="position:absolute;left:572.0px;width:90px;text-align:center;top:183.67px;font-size:12.5px;line-height:20px;color:#000;font-weight:normal;white-space:nowrap;">TotalSales</div><div style="position:absolute;left:667.5px;width:90px;text-align:center;top:183.67px;font-size:12.5px;line-height:20px;color:#000;font-weight:normal;white-space:nowrap;">ProductCost</div><div style="position:absolute;left:762.0px;width:90px;text-align:center;top:183.67px;font-size:12.5px;line-height:20px;color:#000;font-weight:normal;white-space:nowrap;">NetSales</div><div style="position:absolute;left:279.0px;width:100px;text-align:center;top:208.67px;font-size:12.5px;line-height:20px;color:#000;font-weight:normal;white-space:nowrap;">United States</div><div style="position:absolute;left:388.0px;width:120px;text-align:center;top:209.67px;font-size:12.5px;line-height:20px;color:#000;font-weight:normal;white-space:nowrap;">Bikes</div><div style="position:absolute;left:508.5px;width:60px;text-align:right;top:209.67px;font-size:12.5px;line-height:20px;color:#000;font-weight:normal;white-space:nowrap;">83</div><div style="position:absolute;left:582.5px;width:80px;text-align:right;top:209.67px;font-size:12.5px;line-height:20px;color:#000;font-weight:normal;white-space:nowrap;">199,180</div><div style="position:absolute;left:677.5px;width:80px;text-align:right;top:209.67px;font-size:12.5px;line-height:20px;color:#000;font-weight:normal;white-space:nowrap;">207,151</div><div style="position:absolute;left:771.5px;width:80px;text-align:right;top:209.67px;font-size:12.5px;line-height:20px;color:#000;font-weight:normal;white-space:nowrap;">-7,971</div><div style="position:absolute;left:388.0px;width:120px;text-align:center;top:236.67px;font-size:12.5px;line-height:20px;color:#000;font-weight:normal;white-space:nowrap;">Components</div><div style="position:absolute;left:508.5px;width:60px;text-align:right;top:236.67px;font-size:12.5px;line-height:20px;color:#000;font-weight:normal;white-space:nowrap;">49</div><div style="position:absolute;left:582.5px;width:80px;text-align:right;top:236.67px;font-size:12.5px;line-height:20px;color:#000;font-weight:normal;white-space:nowrap;">28,476</div><div style="position:absolute;left:677.5px;width:80px;text-align:right;top:236.67px;font-size:12.5px;line-height:20px;color:#000;font-weight:normal;white-space:nowrap;">27,601</div><div style="position:absolute;left:771.5px;width:80px;text-align:right;top:236.67px;font-size:12.5px;line-height:20px;color:#000;font-weight:normal;white-space:nowrap;">875</div><div style="position:absolute;left:388.0px;width:120px;text-align:center;top:262.67px;font-size:12.5px;line-height:20px;color:#000;font-weight:normal;white-space:nowrap;">Clothing</div><div style="position:absolute;left:508.5px;width:60px;text-align:right;top:262.67px;font-size:12.5px;line-height:20px;color:#000;font-weight:normal;white-space:nowrap;">25</div><div style="position:absolute;left:582.5px;width:80px;text-align:right;top:262.67px;font-size:12.5px;line-height:20px;color:#000;font-weight:normal;white-space:nowrap;">3,481</div><div style="position:absolute;left:677.5px;width:80px;text-align:right;top:262.67px;font-size:12.5px;line-height:20px;color:#000;font-weight:normal;white-space:nowrap;">3,243</div><div style="position:absolute;left:771.5px;width:80px;text-align:right;top:262.67px;font-size:12.5px;line-height:20px;color:#000;font-weight:normal;white-space:nowrap;">238</div><div style="position:absolute;left:388.0px;width:120px;text-align:center;top:289.67px;font-size:12.5px;line-height:20px;color:#000;font-weight:normal;white-space:nowrap;">Accessories</div><div style="position:absolute;left:508.5px;width:60px;text-align:right;top:289.67px;font-size:12.5px;line-height:20px;color:#000;font-weight:normal;white-space:nowrap;">10</div><div style="position:absolute;left:582.5px;width:80px;text-align:right;top:289.67px;font-size:12.5px;line-height:20px;color:#000;font-weight:normal;white-space:nowrap;">1,742</div><div style="position:absolute;left:677.5px;width:80px;text-align:right;top:289.67px;font-size:12.5px;line-height:20px;color:#000;font-weight:normal;white-space:nowrap;">1,114</div><div style="position:absolute;left:771.5px;width:80px;text-align:right;top:289.67px;font-size:12.5px;line-height:20px;color:#000;font-weight:normal;white-space:nowrap;">628</div><div style="position:absolute;left:382px;top:314px;width:473px;height:27px;background:#e9e9e9"></div><div style="position:absolute;left:388.0px;width:120px;text-align:center;top:315.67px;font-size:12.5px;line-height:20px;color:#0000ff;font-weight:normal;white-space:nowrap;">Sum</div><div style="position:absolute;left:508.5px;width:60px;text-align:right;top:315.67px;font-size:12.5px;line-height:20px;color:#0000ff;font-weight:normal;white-space:nowrap;">167</div><div style="position:absolute;left:582.5px;width:80px;text-align:right;top:315.67px;font-size:12.5px;line-height:20px;color:#0000ff;font-weight:normal;white-space:nowrap;">232,879</div><div style="position:absolute;left:677.5px;width:80px;text-align:right;top:315.67px;font-size:12.5px;line-height:20px;color:#0000ff;font-weight:normal;white-space:nowrap;">239,110</div><div style="position:absolute;left:771.5px;width:80px;text-align:right;top:315.67px;font-size:12.5px;line-height:20px;color:#0000ff;font-weight:normal;white-space:nowrap;">-6,231</div><div style="position:absolute;left:276px;top:374.50px;font-size:13px;line-height:20px;color:#3636a6;font-weight:bold;white-space:nowrap;letter-spacing:0.5px">Brad Taylor</div><div style="position:absolute;left:276px;top:400px;width:579px;height:27px;background:#e9e9e9"></div><div style="position:absolute;left:279.0px;width:100px;text-align:center;top:401.67px;font-size:12.5px;line-height:20px;color:#000;font-weight:normal;white-space:nowrap;">Country</div><div style="position:absolute;left:387.5px;width:120px;text-align:center;top:401.67px;font-size:12.5px;line-height:20px;color:#000;font-weight:normal;white-space:nowrap;">CategoryName</div><div style="position:absolute;left:512.0px;width:60px;text-align:center;top:401.67px;font-size:12.5px;line-height:20px;color:#000;font-weight:normal;white-space:nowrap;">NOrders</div><div style="position:absolute;left:572.0px;width:90px;text-align:center;top:401.67px;font-size:12.5px;line-height:20px;color:#000;font-weight:normal;white-space:nowrap;">TotalSales</div><div style="position:absolute;left:667.5px;width:90px;text-align:center;top:401.67px;font-size:12.5px;line-height:20px;color:#000;font-weight:normal;white-space:nowrap;">ProductCost</div><div style="position:absolute;left:762.0px;width:90px;text-align:center;top:401.67px;font-size:12.5px;line-height:20px;color:#000;font-weight:normal;white-space:nowrap;">NetSales</div><div style="position:absolute;left:279.0px;width:100px;text-align:center;top:427.67px;font-size:12.5px;line-height:20px;color:#000;font-weight:normal;white-space:nowrap;">United States</div><div style="position:absolute;left:388.0px;width:120px;text-align:center;top:428.67px;font-size:12.5px;line-height:20px;color:#000;font-weight:normal;white-space:nowrap;">Bikes</div><div style="position:absolute;left:508.5px;width:60px;text-align:right;top:428.67px;font-size:12.5px;line-height:20px;color:#000;font-weight:normal;white-space:nowrap;">60</div><div style="position:absolute;left:582.5px;width:80px;text-align:right;top:428.67px;font-size:12.5px;line-height:20px;color:#000;font-weight:normal;white-space:nowrap;">117,996</div><div style="position:absolute;left:677.5px;width:80px;text-align:right;top:428.67px;font-size:12.5px;line-height:20px;color:#000;font-weight:normal;white-space:nowrap;">121,423</div><div style="position:absolute;left:771.5px;width:80px;text-align:right;top:428.67px;font-size:12.5px;line-height:20px;color:#000;font-weight:normal;white-space:nowrap;">-3,427</div><div style="position:absolute;left:388.0px;width:120px;text-align:center;top:454.67px;font-size:12.5px;line-height:20px;color:#000;font-weight:normal;white-space:nowrap;">Clothing</div><div style="position:absolute;left:508.5px;width:60px;text-align:right;top:454.67px;font-size:12.5px;line-height:20px;color:#000;font-weight:normal;white-space:nowrap;">24</div><div style="position:absolute;left:582.5px;width:80px;text-align:right;top:454.67px;font-size:12.5px;line-height:20px;color:#000;font-weight:normal;white-space:nowrap;">2,894</div><div style="position:absolute;left:677.5px;width:80px;text-align:right;top:454.67px;font-size:12.5px;line-height:20px;color:#000;font-weight:normal;white-space:nowrap;">2,438</div><div style="position:absolute;left:771.5px;width:80px;text-align:right;top:454.67px;font-size:12.5px;line-height:20px;color:#000;font-weight:normal;white-space:nowrap;">456</div><div style="position:absolute;left:388.0px;width:120px;text-align:center;top:481.67px;font-size:12.5px;line-height:20px;color:#000;font-weight:normal;white-space:nowrap;">Components</div><div style="position:absolute;left:508.5px;width:60px;text-align:right;top:481.67px;font-size:12.5px;line-height:20px;color:#000;font-weight:normal;white-space:nowrap;">47</div><div style="position:absolute;left:582.5px;width:80px;text-align:right;top:481.67px;font-size:12.5px;line-height:20px;color:#000;font-weight:normal;white-space:nowrap;">21,439</div><div style="position:absolute;left:677.5px;width:80px;text-align:right;top:481.67px;font-size:12.5px;line-height:20px;color:#000;font-weight:normal;white-space:nowrap;">20,746</div><div style="position:absolute;left:771.5px;width:80px;text-align:right;top:481.67px;font-size:12.5px;line-height:20px;color:#000;font-weight:normal;white-space:nowrap;">693</div><div style="position:absolute;left:388.0px;width:120px;text-align:center;top:507.67px;font-size:12.5px;line-height:20px;color:#000;font-weight:normal;white-space:nowrap;">Accessories</div><div style="position:absolute;left:508.5px;width:60px;text-align:right;top:507.67px;font-size:12.5px;line-height:20px;color:#000;font-weight:normal;white-space:nowrap;">12</div><div style="position:absolute;left:582.5px;width:80px;text-align:right;top:507.67px;font-size:12.5px;line-height:20px;color:#000;font-weight:normal;white-space:nowrap;">1,342</div><div style="position:absolute;left:677.5px;width:80px;text-align:right;top:507.67px;font-size:12.5px;line-height:20px;color:#000;font-weight:normal;white-space:nowrap;">835</div><div style="position:absolute;left:771.5px;width:80px;text-align:right;top:507.67px;font-size:12.5px;line-height:20px;color:#000;font-weight:normal;white-space:nowrap;">507</div><div style="position:absolute;left:382px;top:533px;width:473px;height:26px;background:#e9e9e9"></div><div style="position:absolute;left:388.0px;width:120px;text-align:center;top:534.67px;font-size:12.5px;line-height:20px;color:#0000ff;font-weight:normal;white-space:nowrap;">Sum</div><div style="position:absolute;left:508.5px;width:60px;text-align:right;top:534.67px;font-size:12.5px;line-height:20px;color:#0000ff;font-weight:normal;white-space:nowrap;">143</div><div style="position:absolute;left:582.5px;width:80px;text-align:right;top:534.67px;font-size:12.5px;line-height:20px;color:#0000ff;font-weight:normal;white-space:nowrap;">143,671</div><div style="position:absolute;left:677.5px;width:80px;text-align:right;top:534.67px;font-size:12.5px;line-height:20px;color:#0000ff;font-weight:normal;white-space:nowrap;">145,443</div><div style="position:absolute;left:771.5px;width:80px;text-align:right;top:534.67px;font-size:12.5px;line-height:20px;color:#0000ff;font-weight:normal;white-space:nowrap;">-1,772</div>
</body></html>
